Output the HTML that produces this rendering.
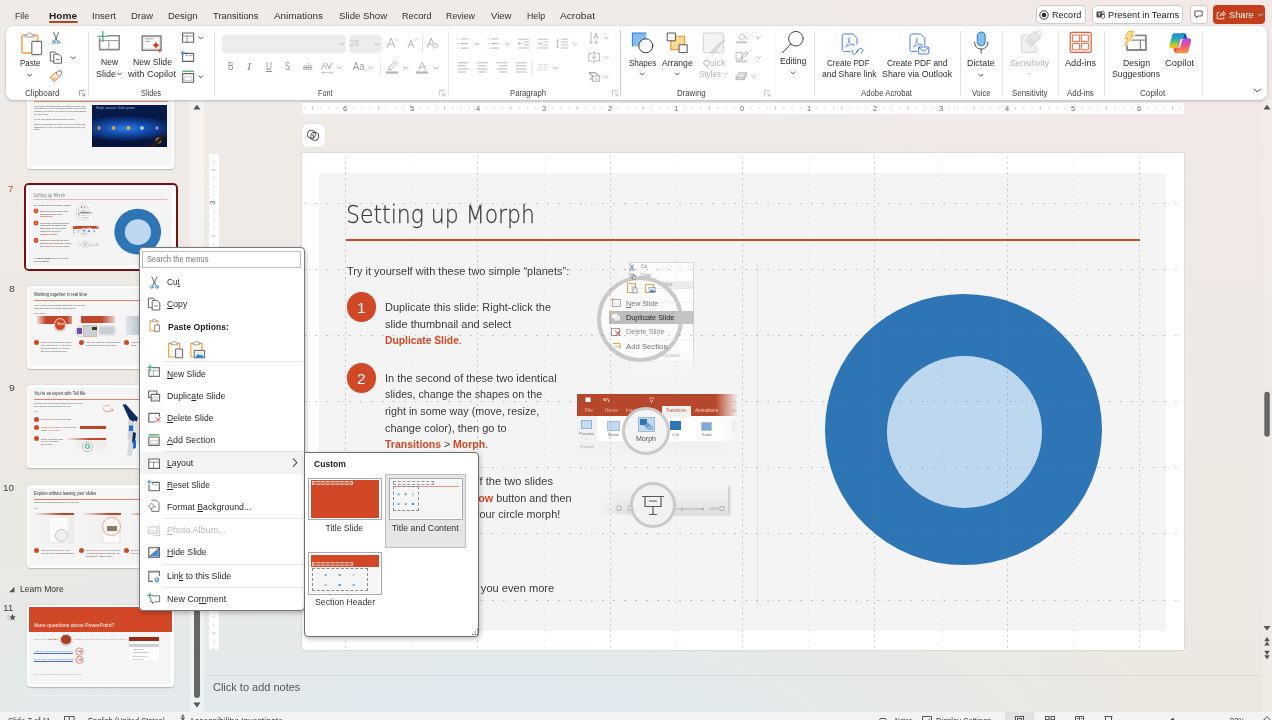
<!DOCTYPE html>
<html lang="en"><head><meta charset="utf-8"><title>PowerPoint</title>
<style>
*{box-sizing:border-box;margin:0;padding:0}
html,body{width:1272px;height:720px;overflow:hidden}
body{font-family:"Liberation Sans",sans-serif;color:#333;position:relative;
background:
 radial-gradient(ellipse 520px 330px at 1250px 60px,rgba(243,232,231,.95),rgba(243,232,231,0) 100%),
 radial-gradient(ellipse 680px 210px at 500px 735px,rgba(222,235,242,1),rgba(222,235,242,0) 100%),
 radial-gradient(ellipse 330px 300px at 40px 700px,rgba(231,233,232,1),rgba(231,233,232,0) 100%),
 linear-gradient(180deg,#f0ebe8 0%,#ede9e4 45%,#ece8e1 100%);}
.a{position:absolute}
.t{position:absolute;white-space:nowrap;line-height:1;font-size:9.3px;color:#2b2b2b}
.i{position:absolute;overflow:visible}
.tab{font-size:9.6px;color:#333}
.rb{font-size:9px;color:#2f2f2f}
.gl{font-size:8.3px;color:#444}
.dis{color:#b4b4b4}
.sep{position:absolute;width:1px;background:#e3e1df;top:31px;height:65px}
.mi{font-size:9.3px;color:#2b2b2b}
.u{text-decoration:underline;text-underline-offset:1px}
.msep{position:absolute;left:163px;width:140px;height:1px;background:#e4e4e4}
svg{display:block}
.rn{font-size:7.5px;color:#6a6a6a}
.gv{position:absolute;top:153.500px;height:496px;width:1px;background-image:linear-gradient(rgba(110,110,110,.36) 1.500px,transparent 1.500px);background-size:1px 5.514px;background-position:0 2.400px}
.gh{position:absolute;left:302.500px;width:881px;height:1px;background-image:linear-gradient(90deg,rgba(110,110,110,.42) 1.400px,transparent 1.400px),linear-gradient(90deg,rgba(110,110,110,.16) 1.200px,transparent 1.200px);background-size:11.028px 1px,11.028px 1px;background-position:1.600px 0,7.200px 0}
.gf{opacity:.3}
.th{position:absolute;background:#fff;border-radius:3.500px;box-shadow:0 .5px 1.500px rgba(0,0,0,.22)}
.thi{position:absolute;left:2.800px;top:2.600px;right:2.800px;bottom:2.800px;background:#f5f5f5}
.sn{font-size:9.800px;color:#444}
.tt{font-size:4.900px;color:#333}
.tx{font-size:2px;color:#4a4a4a}
.st{font-size:8.800px;color:#3a3a3a}
.bl{position:absolute;width:5px;height:5px;border-radius:50%;background:#d24726}
.sl{font-size:11.200px;color:#3b3b3b}
.or{color:#d24726;font-weight:bold}
</style></head><body>
<!-- tab row -->
<div id="tabs">
<span class="t tab" style="top: 10.57px; left: 15px; transform-origin: 0px 50%; transform: scaleX(0.905);">File</span>
<span class="t tab" style="font-weight: bold; color: rgb(34, 34, 34); top: 10.57px; left: 49.3px; transform-origin: 0px 50%; transform: scaleX(1.054);">Home</span>
<div class="a" style="left:49.3px;top:21px;width:28.3px;height:1.7px;background:#c43e1c;border-radius:1px"></div>
<span class="t tab" style="top: 10.57px; left: 91.5px; transform-origin: 0px 50%; transform: scaleX(1.002);">Insert</span>
<span class="t tab" style="top: 10.57px; left: 130.5px; transform-origin: 0px 50%; transform: scaleX(0.983);">Draw</span>
<span class="t tab" style="top: 10.57px; left: 167.5px; transform-origin: 0px 50%; transform: scaleX(0.987);">Design</span>
<span class="t tab" style="top: 10.57px; left: 213px; transform-origin: 0px 50%; transform: scaleX(0.977);">Transitions</span>
<span class="t tab" style="top: 10.57px; left: 274px; transform-origin: 0px 50%; transform: scaleX(1.032);">Animations</span>
<span class="t tab" style="top: 10.57px; left: 338.5px; transform-origin: 0px 50%; transform: scaleX(1.002);">Slide Show</span>
<span class="t tab" style="top: 10.57px; left: 401.5px; transform-origin: 0px 50%; transform: scaleX(0.954);">Record</span>
<span class="t tab" style="top: 10.57px; left: 446px; transform-origin: 0px 50%; transform: scaleX(0.922);">Review</span>
<span class="t tab" style="top: 10.57px; left: 490.5px; transform-origin: 0px 50%; transform: scaleX(0.994);">View</span>
<span class="t tab" style="top: 10.57px; left: 526.5px; transform-origin: 0px 50%; transform: scaleX(0.912);">Help</span>
<span class="t tab" style="top: 10.57px; left: 560px; transform-origin: 0px 50%; transform: scaleX(1.058);">Acrobat</span>
<!-- right buttons -->
<div class="a" style="left:1036px;top:5.200px;width:50px;height:18.400px;background:#fff;border:1px solid #cfcbc9;border-radius:4px"></div>
<svg class="i" style="left:1039.200px;top:9.700px" width="10" height="10" viewBox="0 0 10 10"><circle cx="5" cy="5" r="4.200" fill="none" stroke="#2a2a2a" stroke-width=".9"></circle><circle cx="5" cy="5" r="2.300" fill="#2a2a2a"></circle></svg>
<span class="t tab" style="color: rgb(34, 34, 34); top: 10.07px; left: 1051.8px; transform-origin: 0px 50%; transform: scaleX(0.944);">Record</span>
<div class="a" style="left:1092.3px;top:5.200px;width:91px;height:18.400px;background:#fff;border:1px solid #cfcbc9;border-radius:4px"></div>
<svg class="i" style="left:1096px;top:10px" width="9" height="9" viewBox="0 0 9 9"><rect x=".5" y="1.5" width="5.5" height="6" rx="1" fill="#444"></rect><circle cx="6.8" cy="2.6" r="1.5" fill="none" stroke="#444" stroke-width=".8"></circle><path d="M6 4.5h2.5v2.5a1.5 1.5 0 0 1-2.5 1" fill="none" stroke="#444" stroke-width=".8"></path><path d="M2 3.4h2.6M3.3 3.4v3" stroke="#fff" stroke-width=".8"></path></svg>
<span class="t tab" style="color: rgb(34, 34, 34); top: 10.07px; left: 1108px; transform-origin: 0px 50%; transform: scaleX(0.96);">Present in Teams</span>
<div class="a" style="left:1189.5px;top:5.200px;width:18px;height:18.400px;background:#fff;border:1px solid #cfcbc9;border-radius:4px"></div>
<svg class="i" style="left:1194px;top:10px" width="9" height="9" viewBox="0 0 9 9"><path d="M.8 1h7.4v5H4L2.3 7.7V6H.8z" fill="none" stroke="#333" stroke-width=".8" stroke-linejoin="round"></path></svg>
<div class="a" style="left:1213.3px;top:5.200px;width:52px;height:18.400px;background:#c43e1c;border-radius:4px"></div>
<svg class="i" style="left:1216px;top:9.5px" width="10" height="10" viewBox="0 0 10 10"><path d="M3.6 2.6H1.2v6.2h6.6V7M4 6.2c.2-2 1.4-3 3.4-3V1.6L9.4 3.8 7.4 6V4.6c-1.6 0-2.6.4-3.4 1.6z" fill="none" stroke="#fff" stroke-width=".8" stroke-linejoin="round"></path></svg>
<span class="t tab" style="color: rgb(255, 255, 255); top: 10.07px; left: 1228.5px; transform-origin: 0px 50%; transform: scaleX(0.968);">Share</span>
<svg class="i" style="left:1257.5px;top:13px" width="5" height="4" viewBox="0 0 5 4"><path d="M.5.8l2 2 2-2" fill="none" stroke="#fff" stroke-width=".9"></path></svg>
</div>
<!-- left pane -->
<div id="left">
<div class="a" style="left:190px;top:100px;width:13.600px;height:612px;background:rgba(248,248,248,.6)"></div>
<svg class="i" style="left:190px;top:100px" width="14" height="612" viewBox="0 0 14 612"><path d="M3.300 9.600L6.900 4.800l3.600 4.800z" fill="#555"></path><path d="M3.300 602.600L6.900 607.400l3.600-4.800z" fill="#555"></path><rect x="4" y="470" width="6" height="128" rx="3" fill="#666"></rect></svg>
<!-- thumb 6 -->
<div class="th" style="left:26.700px;top:85px;width:147.800px;height:84px"><div class="thi"></div></div>
<div class="a" style="left:34px;top:100.600px;width:134px;height:.8px;background:#e7907a"></div>
<div class="a" style="left:92px;top:105px;width:74.700px;height:41.500px;background:radial-gradient(ellipse 52px 13px at 45% 56%,#2f7fe6 0%,#1450b4 40%,rgba(8,28,84,0) 100%),linear-gradient(#071a4c,#06143c)"></div>
<svg class="i" style="left:92px;top:105px" width="75" height="42" viewBox="0 0 75 42"><circle cx="7" cy="23" r="1.900" fill="#c8873d"></circle><circle cx="21.500" cy="23" r="2" fill="#e09a45"></circle><circle cx="36.500" cy="23" r="1.900" fill="#e8b23a"></circle><circle cx="50" cy="23" r="1.900" fill="#9fd0d8"></circle><circle cx="65" cy="23" r="1.800" fill="#8d87e0"></circle><circle cx="66.500" cy="35.500" r="3" fill="#b0772f"></circle><path d="M58 41l14-12 2 2-12 11z" fill="#2a1c10"></path></svg>
<span class="t" style="font-size: 2.6px; color: rgb(159, 180, 220); top: 108.11px; left: 96px; transform-origin: 0px 50%; transform: scaleX(1.113);">Morph transition: Solar system</span>
<span class="t tx" style="top: 104.63px; left: 34px; transform-origin: 0px 50%; transform: scaleX(0.917);">Morph makes smooth animations and object movements in your</span>
<span class="t tx" style="top: 107.43px; left: 34px; transform-origin: 0px 50%; transform: scaleX(1.063);">presentations. You use two similar slides to perform the</span>
<span class="t tx" style="top: 110.23px; left: 34px; transform-origin: 0px 50%; transform: scaleX(0.934);">animation, but it looks to your audience like the action happens</span>
<span class="t tx" style="top: 113.03px; left: 34px; transform-origin: 0px 50%; transform: scaleX(1.322);">on one slide.</span>
<span class="t tx" style="top: 117.93px; left: 34px; transform-origin: 0px 50%; transform: scaleX(0.917);"><span style="color:#d24726">Play</span> the video on the right to see a quick example.</span>
<span class="t tx" style="top: 122.73px; left: 34px; transform-origin: 0px 50%; transform: scaleX(0.927);">Morph is a subscription-only feature. If you have an Office 365</span>
<span class="t tx" style="top: 125.53px; left: 34px; transform-origin: 0px 50%; transform: scaleX(0.946);">subscription, you can try it yourself with the steps on the next</span>
<span class="t tx" style="top: 128.33px; left: 34px; transform-origin: 0px 50%; transform: scaleX(1.284);">slide.</span>
<!-- thumb 7 -->
<div class="a" style="left:24px;top:183px;width:153.500px;height:88.300px;border:2.200px solid #7c0f12;border-radius:5px;background:#fff"></div>
<div id="thumb7" class="a" style="left:26.200px;top:185.200px;width:149px;height:84px;overflow:hidden;border-radius:3px;background:#fff"><div class="a" style="left: 0px; top: 0px; width: 1272px; height: 720px; transform-origin: 0px 0px; transform: scale(0.1689) translate(-302px, -153px);">
<div class="a" style="left:319.400px;top:172.800px;width:846.600px;height:458.200px;background:#f4f4f4"></div>
<span class="t" style="font-size: 25.6px; color: rgb(62, 62, 62); font-family: &quot;DejaVu Sans Light&quot;, &quot;DejaVu Sans&quot;, &quot;Liberation Sans&quot;, sans-serif; font-weight: 200; -webkit-text-stroke: 0.28px rgb(62, 62, 62); top: 201.83px; left: 345.8px; transform-origin: 0px 50%; transform: scaleX(0.858);">Setting up Morph</span>
<div class="a" style="left:345.800px;top:239.300px;width:794.400px;height:1.900px;background:#d24726"></div>
<span class="t sl" style="top: 265.59px; left: 346.7px; transform-origin: 0px 50%; transform: scaleX(0.984);">Try it yourself with these two simple “planets”:</span>
<div class="a" style="left:346.700px;top:292.4px;width:29.600px;height:29.600px;border-radius:50%;background:#d24726"></div>
<span class="t" style="font-size: 15.5px; color: rgb(255, 255, 255); top: 299.68px; left: 357.19px; transform: scaleX(1.002);">1</span>
<span class="t sl" style="top: 302.29px; left: 385.3px; transform-origin: 0px 50%; transform: scaleX(0.978);">Duplicate this slide: Right-click the</span>
<span class="t sl" style="top: 318.59px; left: 385.3px; transform-origin: 0px 50%; transform: scaleX(0.982);">slide thumbnail and select</span>
<span class="t sl" style="top: 335.09px; left: 385.3px; transform-origin: 0px 50%; transform: scaleX(0.921);"><span class="or">Duplicate Slide</span>.</span>
<div class="a" style="left:346.700px;top:363.4px;width:29.600px;height:29.600px;border-radius:50%;background:#d24726"></div>
<span class="t" style="font-size: 15.5px; color: rgb(255, 255, 255); top: 370.68px; left: 357.19px; transform: scaleX(1.002);">2</span>
<span class="t sl" style="top: 373.09px; left: 385.3px; transform-origin: 0px 50%; transform: scaleX(0.982);">In the second of these two identical</span>
<span class="t sl" style="top: 389.49px; left: 385.3px; transform-origin: 0px 50%; transform: scaleX(0.961);">slides, change the shapes on the</span>
<span class="t sl" style="top: 405.99px; left: 385.3px; transform-origin: 0px 50%; transform: scaleX(0.962);">right in some way (move, resize,</span>
<span class="t sl" style="top: 422.59px; left: 385.3px; transform-origin: 0px 50%; transform: scaleX(0.983);">change color), then go to</span>
<span class="t sl" style="top: 438.99px; left: 385.3px; transform-origin: 0px 50%; transform: scaleX(0.94);"><span class="or">Transitions</span> &gt; <span class="or">Morph</span>.</span>
<div class="a" style="left:346.700px;top:466.4px;width:29.600px;height:29.600px;border-radius:50%;background:#d24726"></div>
<span class="t" style="font-size: 15.5px; color: rgb(255, 255, 255); top: 473.68px; left: 357.19px; transform: scaleX(1.002);">3</span>
<span class="t sl" style="top: 476.09px; left: 385.3px; transform-origin: 0px 50%; transform: scaleX(0.993);">Return to the first of the two slides</span>
<span class="t sl" style="top: 492.79px; left: 385.3px; transform-origin: 0px 50%; transform: scaleX(0.967);">and press <span class="or">Slide Show</span> button and then</span>
<span class="t sl" style="top: 509.09px; left: 385.3px; transform-origin: 0px 50%; transform: scaleX(0.968);">select <span class="or">Play</span> to see your circle morph!</span>
<span class="t sl" style="top: 582.79px; left: 346.7px; transform-origin: 0px 50%; transform: scaleX(0.992);"><span class="or" style="font-weight:normal">Hint:</span> <b>Effect Options</b> gives you even more</span>
<span class="t sl" style="top: 599.29px; left: 346.7px; transform-origin: 0px 50%; transform: scaleX(1.007);">options for <b>Morph</b>.</span>
<div class="a" style="left:757.400px;top:260.500px;width:1px;height:352px;background:#ebebeb"></div>
<!-- slide pictures -->
<div class="a" style="left:628.700px;top:261.700px;width:65px;height:110px;background:#fdfdfd;border:1px solid #d6d6d6;border-bottom:none;-webkit-mask-image:linear-gradient(#000 78%,transparent);mask-image:linear-gradient(#000 78%,transparent)"></div>
<div class="a" style="left:630px;top:281px;width:63px;height:7.500px;background:#ececec"></div>
<span class="t" style="font-size: 4.5px; color: rgb(119, 119, 119); top: 264.79px; left: 641px; transform-origin: 0px 50%; transform: scaleX(0.855);">Cut</span>
<span class="t" style="font-size: 4.5px; color: rgb(119, 119, 119); top: 274.39px; left: 641px; transform-origin: 0px 50%; transform: scaleX(0.951);">Copy</span>
<span class="t" style="font-size: 4.5px; color: rgb(153, 153, 153); top: 282.59px; left: 655px; transform-origin: 0px 50%; transform: scaleX(0.61);">Paste Options:</span>
<span class="t" style="font-size: 4.5px; color: rgb(187, 187, 187); top: 354.09px; left: 641px; transform-origin: 0px 50%; transform: scaleX(1.046);">Check for Updates</span>
<div class="a" style="left:597px;top:276px;width:86px;height:86px;border-radius:50%;background:#fbfbfb;border:4.500px solid #c9c9c9"></div>
<div class="a" style="left:608.800px;top:311.400px;width:67px;height:13px;background:#bdbdbd"></div>
<div class="a" style="left:675px;top:311.400px;width:18.500px;height:13px;background:#c4c4c4"></div>
<svg class="i" style="left:0;top:0" width="1272" height="720" viewBox="0 0 1272 720" fill="none">
<path d="M630.500 264.500l3 5M633.500 264.500l-3 5" stroke="#555" stroke-width=".7"></path><circle cx="630.600" cy="270" r=".8" stroke="#2b88d8" stroke-width=".6"></circle><circle cx="633.400" cy="270" r=".8" stroke="#2b88d8" stroke-width=".6"></circle>
<path d="M631 274h3v4h-3zM632.500 275.500h3v4h-3z" stroke="#666" stroke-width=".6" fill="#fff"></path>
<rect x="627.500" y="283.500" width="8" height="9" stroke="#e8a23c" stroke-width="1" fill="#fff"></rect><path d="M631 286h5M631 288h5M631 290h5" stroke="#999" stroke-width=".6"></path><rect x="633" y="288" width="4" height="5" fill="#fff" stroke="#666" stroke-width=".6"></rect>
<rect x="645.500" y="284.500" width="8" height="8" stroke="#e8a23c" stroke-width="1" fill="#fff"></rect><rect x="649" y="287.500" width="6.500" height="5" fill="#dfeaf6" stroke="#888" stroke-width=".6"></rect><path d="M649.500 292l2-2.400 1.500 1.400 1-.8 1.500 1.800z" fill="#2e75b6"></path>
<rect x="612.500" y="299.500" width="8" height="7" stroke="#999" stroke-width=".8" fill="#f3f3f3"></rect><path d="M611 298l2.400 2.400M613.400 298l-2.400 2.400" stroke="#e8a23c" stroke-width=".7"></path>
<rect x="613.500" y="315" width="7" height="6" stroke="#aaa" stroke-width=".7" fill="#eee"></rect><rect x="611.500" y="313.500" width="6" height="5" fill="#f6f6f6" stroke="#ccc" stroke-width=".5"></rect><circle cx="612" cy="314" r="1.200" fill="#f3c37a"></circle>
<rect x="611.500" y="328.500" width="8" height="7" stroke="#888" stroke-width=".8" fill="#fafafa"></rect><path d="M615 330.500l5.500 5.500M620.500 330.500l-5.500 5.500" stroke="#e23b2e" stroke-width="1"></path>
<path d="M613 343.500h7v5.500" stroke="#e8a23c" stroke-width="1"></path><path d="M615 346.500h5" stroke="#e8a23c" stroke-width=".8"></path>
<path d="M631 288.600h62M631 302.300h62M631 340h62M631 362h62" stroke="#e2e2e2" stroke-width=".5"></path>
</svg>
<span class="t" style="font-size: 7.6px; color: rgb(119, 119, 119); top: 299.62px; left: 626.3px; transform-origin: 0px 50%; transform: scaleX(0.942);"><span class="u">N</span>ew Slide</span>
<span class="t" style="font-size: 7.6px; color: rgb(38, 38, 38); top: 313.92px; left: 626.3px; transform-origin: 0px 50%; transform: scaleX(0.952);">Duplicate Slide</span>
<span class="t" style="font-size: 7.6px; color: rgb(138, 138, 138); top: 328.42px; left: 626.3px; transform-origin: 0px 50%; transform: scaleX(0.945);">Delete Slide</span>
<span class="t" style="font-size: 7.6px; color: rgb(119, 119, 119); top: 342.92px; left: 626.3px; transform-origin: 0px 50%; transform: scaleX(1.018);">Add Section</span>
<!-- ribbon picture -->
<div class="a" style="left:577.300px;top:393.500px;width:161px;height:66px;-webkit-mask-image:linear-gradient(90deg,#000 86%,transparent 100%),linear-gradient(#000 82%,transparent 100%);-webkit-mask-composite:source-in;mask-image:linear-gradient(90deg,#000 86%,transparent 100%),linear-gradient(#000 82%,transparent 100%);mask-composite:intersect">
 <div class="a" style="left:0;top:0;width:161px;height:22px;background:#b7472a"></div>
 <div class="a" style="left:0;top:22px;width:161px;height:44px;background:#f1f1f1"></div>
 <div class="a" style="left:20px;top:22px;width:141px;height:25px;background:#fff"></div>
 <div class="a" style="left:85px;top:12px;width:29px;height:11px;background:#f1f1f1"></div>
 <div class="a" style="left:4px;top:26px;width:11px;height:9px;background:#c6dcf0;border:.5px solid #8fb4dc"></div>
 <div class="a" style="left:30px;top:27px;width:13px;height:10px;background:#c3d9ef;border:.5px solid #a3c0de"></div>
 <div class="a" style="left:93px;top:27px;width:11px;height:9px;background:#2e75b6"></div>
 <div class="a" style="left:124px;top:28px;width:11px;height:9px;background:#7fa8d6;border:.5px solid #a9c4e2"></div>
 <div class="a" style="left:155px;top:27px;width:8px;height:10px;background:#c3d9ef"></div>
</div>
<span class="t" style="font-size: 4.5px; color: rgb(230, 184, 170); top: 408.59px; left: 585px; transform-origin: 0px 50%; transform: scaleX(1.101);">File</span>
<span class="t" style="font-size: 4.5px; color: rgb(230, 184, 170); top: 408.59px; left: 605px; transform-origin: 0px 50%; transform: scaleX(1.082);">Home</span>
<span class="t" style="font-size: 4.5px; color: rgb(230, 184, 170); top: 408.59px; left: 626px; transform-origin: 0px 50%; transform: scaleX(1.065);">Insert</span>
<span class="t" style="font-size: 4.5px; color: rgb(201, 84, 58); top: 408.59px; left: 666px; transform-origin: 0px 50%; transform: scaleX(0.916);">Transitions</span>
<span class="t" style="font-size: 4.5px; color: rgb(240, 207, 197); top: 408.59px; left: 695px; transform-origin: 0px 50%; transform: scaleX(1.033);">Animations</span>
<span class="t" style="font-size: 4.5px; color: rgb(219, 167, 154); top: 408.59px; left: 726px; transform-origin: 0px 50%; transform: scaleX(1.098);">Slide</span>
<span class="t" style="font-size: 4.3px; color: rgb(119, 119, 119); top: 431.69px; left: 579px; transform-origin: 0px 50%; transform: scaleX(0.981);">Preview</span>
<span class="t" style="font-size: 4.3px; color: rgb(170, 170, 170); top: 444.69px; left: 580px; transform-origin: 0px 50%; transform: scaleX(0.915);">Preview</span>
<span class="t" style="font-size: 4.3px; color: rgb(102, 102, 102); top: 432.69px; left: 608px; transform-origin: 0px 50%; transform: scaleX(1.07);">None</span>
<span class="t" style="font-size: 4.3px; color: rgb(119, 119, 119); top: 432.69px; left: 672px; transform-origin: 0px 50%; transform: scaleX(1.047);">Cut</span>
<span class="t" style="font-size: 4.3px; color: rgb(119, 119, 119); top: 432.69px; left: 702px; transform-origin: 0px 50%; transform: scaleX(1.021);">Fade</span>
<svg class="i" style="left:0;top:0" width="1272" height="720" viewBox="0 0 1272 720" fill="none" stroke="#fff" stroke-width=".8">
<rect x="585.500" y="397.500" width="5" height="4.500" fill="#fff" stroke="none"></rect><path d="M604.500 400c2-2.500 5-1 4 2M604 398v2.400h2.400"></path><path d="M649 398h5M650 399.500l1.500 3 1.500-3" stroke-width=".6"></path>
</svg>
<div class="a" style="left:622px;top:407px;width:48px;height:48px;border-radius:50%;background:#f4f4f4;border:3px solid #c9c9c9"></div>
<div class="a" style="left:637.500px;top:417px;width:17px;height:15px;background:#c3d9ef;border:.6px solid #9cbbdc"></div>
<div class="a" style="left:639.500px;top:419px;width:7px;height:6px;background:#2e75b6"></div>
<div class="a" style="left:644.500px;top:422.500px;width:5px;height:5px;background:#6f9fd0;transform:rotate(40deg)"></div>
<div class="a" style="left:648px;top:425.500px;width:5px;height:4.500px;background:#8fb4dc"></div>
<span class="t" style="font-size: 7.5px; color: rgb(85, 85, 85); top: 435.28px; left: 636px; transform-origin: 0px 50%; transform: scaleX(0.94);">Morph</span>
<!-- slideshow bar -->
<div class="a" style="left:612px;top:486px;width:117.500px;height:29px;background:linear-gradient(90deg,rgba(0,0,0,0),rgba(0,0,0,.16) 40%);filter:blur(1px)"></div>
<div class="a" style="left:599px;top:484px;width:129px;height:30px;background:linear-gradient(#f6f6f6 0%,#ececec 55%,#dedede 100%);-webkit-mask-image:linear-gradient(90deg,transparent,#000 22%);mask-image:linear-gradient(90deg,transparent,#000 22%)"></div>
<svg class="i" style="left:0;top:0" width="1272" height="720" viewBox="0 0 1272 720" fill="none" stroke="#999" stroke-width=".6">
<path d="M676 509h28M682 507v4M702.500 507.500v3M701 509h3"></path><rect x="617" y="506" width="4" height="4.500"></rect><rect x="628" y="506" width="4" height="4.500"></rect><rect x="720" y="506.500" width="4" height="4"></rect>
</svg>
<span class="t" style="font-size: 4px; color: rgb(153, 153, 153); top: 506.85px; left: 709px; transform-origin: 0px 50%; transform: scaleX(0.977);">120%</span>
<div class="a" style="left:629.700px;top:481.700px;width:46.600px;height:46.600px;border-radius:50%;background:#f1f1f1;border:3px solid #c9c9c9"></div>
<svg class="i" style="left:0;top:0" width="1272" height="720" viewBox="0 0 1272 720" fill="none" stroke="#5a5a5a" stroke-width="1.200">
<path d="M642 496.500h22M645 497v9.500h16v-9.500M649 501h8M653 506.500v8M649 514.500h8"></path>
</svg>
<!-- donut -->
<div class="a" style="left:825.300px;top:294.100px;width:276.800px;height:270.800px;border-radius:50%;background:#2e75b6"></div>
<div class="a" style="left:886.700px;top:355.500px;width:155.800px;height:152px;border-radius:50%;background:#bdd7ee"></div>
</div></div>
<span class="t sn" style="color: rgb(210, 71, 38); top: 184.04px; left: 8.4px; transform-origin: 0px 50%; transform: scaleX(0.99);">7</span>
<!-- thumb 8 -->
<span class="t sn" style="top: 283.64px; left: 8.6px; transform-origin: 0px 50%; transform: scaleX(1.064);">8</span>
<div class="th" style="left:26.700px;top:285.700px;width:147.800px;height:83.300px"><div class="thi"></div></div>
<span class="t tt" style="top: 292.67px; left: 34px; transform-origin: 0px 50%; transform: scaleX(0.849);">Working together in real time</span>
<div class="a" style="left:34px;top:299.900px;width:134px;height:.9px;background:#e27f66"></div>
<span class="t tx" style="top: 303.53px; left: 34px; transform-origin: 0px 50%; transform: scaleX(0.923);">When you share your presentation with others, you’ll see them</span>
<span class="t tx" style="top: 306.53px; left: 34px; transform-origin: 0px 50%; transform: scaleX(1.369);">working with you at the same time.</span>
<span class="t tx" style="top: 311.93px; left: 34px; transform-origin: 0px 50%; transform: scaleX(0.925);">How it works:</span>
<div class="a" style="left:37px;top:316px;width:35px;height:8px;background:linear-gradient(90deg,rgba(192,66,40,.15),#c0452a 25%,#c0452a 85%,rgba(192,66,40,.5));filter:blur(.4px)"></div>
<div class="a" style="left:53.800px;top:318px;width:12.600px;height:12.600px;border-radius:50%;background:#d24726;border:1px solid #f2ded8;box-shadow:0 .5px 1px rgba(0,0,0,.3)"></div>
<span class="t" style="font-size: 2.8px; color: rgb(255, 255, 255); top: 322.8px; left: 56.5px; transform-origin: 0px 50%; transform: scaleX(1.004);">Share</span>
<div class="a" style="left:81px;top:316px;width:34px;height:6.500px;background:linear-gradient(90deg,#c0452a 60%,rgba(192,66,40,.2));filter:blur(.4px)"></div>
<div class="a" style="left:74.500px;top:325.500px;width:11px;height:11px;border-radius:50%;background:#f4f2f6;border:.7px solid #c9c9c9"></div>
<div class="a" style="left:77px;top:328px;width:4.500px;height:6px;background:#6a4bb0"></div>
<div class="a" style="left:83px;top:325px;width:14px;height:12px;background:#c9d0d6;border:.6px solid #e3b5aa"></div>
<div class="a" style="left:92px;top:326.500px;width:4.500px;height:3.500px;background:#3a3f1e"></div>
<div class="a" style="left:99px;top:326px;width:16px;height:9px;background:#c8cfd4;filter:blur(.8px)"></div>
<div class="a" style="left:126px;top:316px;width:20px;height:19px;background:linear-gradient(90deg,rgba(170,180,196,.25),#aab3c2);filter:blur(.7px)"></div>
<div class="bl" style="left:34px;top:340.300px"></div><div class="bl" style="left:79.200px;top:340.300px"></div><div class="bl" style="left:124px;top:340.300px"></div>
<span class="t tx" style="top: 341.23px; left: 40.5px; transform-origin: 0px 50%; transform: scaleX(0.952);">Select <span style="color:#d24726">Share</span> from above the ribbon,</span>
<span class="t tx" style="top: 344.03px; left: 40.5px; transform-origin: 0px 50%; transform: scaleX(0.936);">or by using short-key <span style="color:#d24726">Alt-ZS</span>, to invite</span>
<span class="t tx" style="top: 346.83px; left: 40.5px; transform-origin: 0px 50%; transform: scaleX(0.973);">people to work with you (You can</span>
<span class="t tx" style="top: 349.63px; left: 40.5px; transform-origin: 0px 50%; transform: scaleX(0.976);">save to the cloud at this point.)</span>
<span class="t tx" style="top: 341.23px; left: 85.5px; transform-origin: 0px 50%; transform: scaleX(0.91);">When other people are in the presentation,</span>
<span class="t tx" style="top: 344.03px; left: 85.5px; transform-origin: 0px 50%; transform: scaleX(0.888);">a marker shows who is on which slide…</span>
<span class="t tx" style="top: 341.23px; left: 130.5px; transform-origin: 0px 50%; transform: scaleX(1.002);">…and the part of the slide they’re</span>
<span class="t tx" style="top: 344.03px; left: 130.5px; transform-origin: 0px 50%; transform: scaleX(0.852);">editing.</span>
<!-- thumb 9 -->
<span class="t sn" style="top: 383.04px; left: 8.6px; transform-origin: 0px 50%; transform: scaleX(1.064);">9</span>
<div class="th" style="left:26.700px;top:385.200px;width:147.800px;height:83.200px"><div class="thi"></div></div>
<span class="t tt" style="top: 392.07px; left: 34px; transform-origin: 0px 50%; transform: scaleX(0.827);">You’re an expert with Tell Me</span>
<div class="a" style="left:34px;top:399.200px;width:134px;height:.9px;background:#e27f66"></div>
<span class="t tx" style="top: 401.63px; left: 34px; transform-origin: 0px 50%; transform: scaleX(0.938);">The Tell Me box finds the right command when you need it,</span>
<span class="t tx" style="top: 404.63px; left: 34px; transform-origin: 0px 50%; transform: scaleX(0.912);">so you can save time and focus on your work.</span>
<span class="t tx" style="top: 409.93px; left: 34px; transform-origin: 0px 50%; transform: scaleX(0.81);">Try it:</span>
<div class="bl" style="left:34px;top:416.700px"></div><div class="bl" style="left:34px;top:425px"></div><div class="bl" style="left:34px;top:436.300px"></div>
<span class="t tx" style="top: 417.93px; left: 40.5px; transform-origin: 0px 50%; transform: scaleX(0.899);">Select the <span style="color:#d24726">Picture</span> picture on the right.</span>
<span class="t tx" style="top: 425.63px; left: 40.5px; transform-origin: 0px 50%; transform: scaleX(0.92);">Type <span style="color:#d24726">animation</span> in the <span style="color:#d24726">Tell Me</span> box, and then</span>
<span class="t tx" style="top: 428.63px; left: 40.5px; transform-origin: 0px 50%; transform: scaleX(0.933);">choose <span style="color:#d24726">Add Animation</span>.</span>
<span class="t tx" style="top: 437.63px; left: 40.5px; transform-origin: 0px 50%; transform: scaleX(0.884);">Choose an animation effect,</span>
<span class="t tx" style="top: 440.43px; left: 40.5px; transform-origin: 0px 50%; transform: scaleX(0.925);">like <span style="color:#d24726">Zoom</span>, and watch</span>
<span class="t tx" style="top: 443.23px; left: 40.5px; transform-origin: 0px 50%; transform: scaleX(0.884);">what happens.</span>
<div class="a" style="left:80px;top:426px;width:25.500px;height:3px;background:#c0452a"></div>
<div class="a" style="left:66px;top:437.600px;width:40px;height:2.400px;background:linear-gradient(90deg,rgba(192,66,40,0),#c0452a 60%)"></div>
<div class="a" style="left:76px;top:440.500px;width:30px;height:14px;background:linear-gradient(rgba(236,236,232,1),rgba(240,238,232,0));"></div>
<div class="a" style="left:82px;top:441.500px;width:10.500px;height:10.500px;border-radius:50%;background:#eef6f0;border:.7px solid #bdbdbd"></div>
<div class="a" style="left:84.800px;top:444.300px;width:5px;height:5px;border-radius:50%;border:.8px solid #2f9c6a"></div>
<svg class="i" style="left:100px;top:400px" width="45" height="65" viewBox="0 0 45 65"><path d="M3 8.500c.8 2.600 2.600 3.600 5 3.200 1.800-.4 3.400-.8 4.600-1.800M11 9l1.800.6-.6 1.800" fill="none" stroke="#d24726" stroke-width=".5"></path><path d="M3 6.500l7-1.500" stroke="#d24726" stroke-width=".4"></path>
<path d="M22.500 4.200l3.500.3 12 13.500-2.500 6.500-6-5z" fill="#0e2a5c"></path><path d="M28.500 19l6 3v14l-4 5-3-2z" fill="#cfd3d6"></path><rect x="29" y="25.500" width="4" height="5.500" fill="#1f6fd0"></rect><path d="M34 20l5 4v18l-5 2z" fill="#e3e5e6"></path><path d="M29 38l5 1-2 16-5 2z" fill="#d7d9da"></path><path d="M33 32l3 1-1 8-3 2z" fill="#0e2a5c"></path><path d="M33 41l3-1v8l-3 1z" fill="#1f6fd0"></path></svg>
<!-- thumb 10 -->
<span class="t sn" style="top: 483.04px; left: 3.4px; transform-origin: 0px 50%; transform: scaleX(1.009);">10</span>
<div class="th" style="left:26.700px;top:485px;width:147.800px;height:83.300px"><div class="thi"></div></div>
<span class="t tt" style="top: 491.67px; left: 34px; transform-origin: 0px 50%; transform: scaleX(0.826);">Explore without leaving your slides</span>
<div class="a" style="left:34px;top:498.800px;width:134px;height:.9px;background:#e27f66"></div>
<span class="t tx" style="top: 501.23px; left: 34px; transform-origin: 0px 50%; transform: scaleX(0.912);">Smart Lookup brings research directly in to PowerPoint.</span>
<span class="t tx" style="top: 506.73px; left: 34px; transform-origin: 0px 50%; transform: scaleX(0.81);">Try it:</span>
<div class="a" style="left:34px;top:512.800px;width:39.500px;height:31.500px;background:linear-gradient(90deg,#f4f4f4,#ececec)"></div>
<div class="a" style="left:34px;top:512.800px;width:39.500px;height:2.400px;background:linear-gradient(90deg,rgba(192,66,40,0),#c0452a 70%)"></div>
<div class="a" style="left:50px;top:518px;width:18px;height:24px;background:#fbfbfb"></div>
<div class="a" style="left:54.500px;top:528.500px;width:13px;height:13px;border-radius:50%;background:#f0f0f0;border:.8px solid #c4c4c4"></div>
<div class="a" style="left:81.500px;top:512.800px;width:39px;height:31.500px;background:linear-gradient(90deg,#f4f4f4,#ececec)"></div>
<div class="a" style="left:81.500px;top:512.800px;width:39px;height:2.400px;background:linear-gradient(90deg,rgba(192,66,40,0),#c0452a 70%)"></div>
<div class="a" style="left:104px;top:518px;width:15px;height:24px;background:#fbfbfb"></div>
<div class="a" style="left:101.500px;top:517px;width:19px;height:19px;border-radius:50%;background:#f8f6f4;border:.7px solid #eaa88f"></div>
<div class="a" style="left:107px;top:525.500px;width:10px;height:5.500px;background:#8c7b62"></div>
<div class="a" style="left:128.500px;top:512.800px;width:30px;height:2.400px;background:linear-gradient(90deg,rgba(192,66,40,0),#c0452a 70%)"></div>
<div class="bl" style="left:34px;top:548px"></div><div class="bl" style="left:79.200px;top:548px"></div><div class="bl" style="left:124px;top:548px"></div>
<span class="t tx" style="top: 548.93px; left: 40.5px; transform-origin: 0px 50%; transform: scaleX(0.94);">Right-click in the word <span style="color:#d24726">office</span> in the</span>
<span class="t tx" style="top: 551.73px; left: 40.5px; transform-origin: 0px 50%; transform: scaleX(0.91);">following phrase: <b>OFFICE TELEPHONE</b></span>
<span class="t tx" style="top: 548.93px; left: 85.5px; transform-origin: 0px 50%; transform: scaleX(0.981);">Choose <span style="color:#d24726">Smart Lookup</span>, and notice that</span>
<span class="t tx" style="top: 551.73px; left: 85.5px; transform-origin: 0px 50%; transform: scaleX(0.921);">results are contextual for that phrase, not</span>
<span class="t tx" style="top: 554.53px; left: 85.5px; transform-origin: 0px 50%; transform: scaleX(1.275);">Microsoft® Office apps.</span>
<span class="t tx" style="top: 548.93px; left: 130.5px; transform-origin: 0px 50%; transform: scaleX(0.859);">Just for fun, try Smart Lookup again by</span>
<span class="t tx" style="top: 551.73px; left: 130.5px; transform-origin: 0px 50%; transform: scaleX(0.987);">right-clicking on the word Office</span>
<!-- section -->
<svg class="i" style="left:8px;top:586px" width="8" height="7" viewBox="0 0 8 7"><path d="M6.500.8v5.400H1z" fill="#555"></path></svg>
<span class="t" style="font-size: 9.6px; color: rgb(51, 51, 51); top: 584.35px; left: 20.3px; transform-origin: 0px 50%; transform: scaleX(0.891);">Learn More</span>
<!-- thumb 11 -->
<span class="t sn" style="top: 602.54px; left: 3.2px; transform-origin: 0px 50%; transform: scaleX(1.032);">11</span>
<svg class="i" style="left:6.500px;top:613px" width="9" height="9" viewBox="0 0 9 9"><path d="M5.500.8l1 2.400 2.300.2-1.800 1.600.6 2.400-2.100-1.300-2.100 1.300.6-2.400L2.200 3.400l2.300-.2z" fill="#555"></path><path d="M.6 2.600h1.200M.4 4.400h1M.8 6.200h1" stroke="#555" stroke-width=".5"></path></svg>
<div class="th" style="left:26.600px;top:604.800px;width:147.600px;height:82px"><div class="thi"></div></div>
<div class="a" style="left:29.400px;top:607.200px;width:142.300px;height:25px;background:#d24726"></div>
<span class="t" style="font-size: 4.8px; color: rgb(255, 255, 255); top: 623.62px; left: 34px; transform-origin: 0px 50%; transform: scaleX(1.078);">More questions about PowerPoint?</span>
<span class="t tx" style="color: rgb(153, 153, 153); top: 638.33px; left: 34px; transform-origin: 0px 50%; transform: scaleX(1.491);">Select the <b style="color:#d24726">Tell Me</b></span>
<div class="a" style="left:60.300px;top:633.500px;width:11.500px;height:11.500px;border-radius:50%;background:#b03a20;border:.8px solid #e7e3e1;box-shadow:0 .5px 1px rgba(0,0,0,.3)"></div>
<span class="t tx" style="color: rgb(153, 153, 153); top: 638.33px; left: 73.5px; transform-origin: 0px 50%; transform: scaleX(1.484);">button and type what you want to know.</span>
<span class="t tx" style="color: rgb(59, 111, 208); text-decoration: underline; top: 650.13px; left: 34px; transform-origin: 0px 50%; transform: scaleX(1.426);">Visit the PowerPoint team blog</span>
<span class="t tx" style="color: rgb(59, 111, 208); text-decoration: underline; top: 658.43px; left: 34px; transform-origin: 0px 50%; transform: scaleX(1.448);">Go to free PowerPoint training</span>
<svg class="i" style="left:74.500px;top:646.500px" width="10" height="18" viewBox="0 0 10 18" fill="none" stroke="#d24726" stroke-width=".6"><circle cx="4.500" cy="4.500" r="3.600"></circle><path d="M2.500 4.500h4M5 3l1.500 1.500L5 6"></path><circle cx="4.500" cy="12.800" r="3.600"></circle><path d="M2.500 12.800h4M5 11.300l1.500 1.500L5 14.300"></path></svg>
<span class="t tx" style="color: rgb(170, 170, 170); top: 673.43px; left: 34px; transform-origin: 0px 50%; transform: scaleX(1.037);">Give us your feedback on this tour, we are listening!</span>
<div class="a" style="left:129px;top:637px;width:30px;height:3.800px;background:#9c2b16"></div>
<div class="a" style="left:129px;top:640.800px;width:30px;height:20.500px;background:#fdfdfd"></div>
<div class="a" style="left:129px;top:644px;width:30px;height:3.200px;background:#cfcfcf"></div>
<span class="t" style="font-size: 2.2px; color: rgb(119, 119, 119); top: 648.32px; left: 133px; transform-origin: 0px 50%; transform: scaleX(0.655);">change font color</span><span class="t" style="font-size: 2.2px; color: rgb(119, 119, 119); top: 651.42px; left: 133px; transform-origin: 0px 50%; transform: scaleX(0.658);">change slide background</span><span class="t" style="font-size: 2.2px; color: rgb(119, 119, 119); top: 654.52px; left: 133px; transform-origin: 0px 50%; transform: scaleX(0.65);">insert image from web</span><span class="t" style="font-size: 2.2px; color: rgb(119, 119, 119); top: 657.62px; left: 133px; transform-origin: 0px 50%; transform: scaleX(0.679);">add slide notes</span>
</div>
<!-- ribbon -->
<div class="a" style="left:5.5px;top:25.8px;width:1261.5px;height:74px;background:#fff;border-radius:7px;box-shadow:0 1px 3px rgba(0,0,0,.22),0 0 1px rgba(0,0,0,.12)"></div>
<div id="ribbon">
<div class="sep" style="left:88px"></div><div class="sep" style="left:214px"></div><div class="sep" style="left:447.5px;background:#ecebea"></div>
<div class="sep" style="left:620.4px;background:#d2d0ce;top:29.500px;height:66.500px"></div><div class="sep" style="left:774.6px;background:#f6f5f4"></div><div class="sep" style="left:813.6px"></div><div class="sep" style="left:960.3px"></div>
<div class="sep" style="left:1002.4px"></div><div class="sep" style="left:1057.6px"></div><div class="sep" style="left:1104.4px"></div><div class="sep" style="left:1202px"></div>
<!-- clipboard -->
<span class="t rb" style="top: 59.08px; left: 19.6px; transform-origin: 0px 50%; transform: scaleX(0.882);">Paste</span>
<span class="t gl" style="top: 88.57px; left: 24.8px; transform-origin: 0px 50%; transform: scaleX(0.969);">Clipboard</span>
<!-- slides -->
<span class="t rb" style="top: 57.88px; left: 100.6px; transform-origin: 0px 50%; transform: scaleX(0.949);">New</span>
<span class="t rb" style="top: 69.98px; left: 95.6px; transform-origin: 0px 50%; transform: scaleX(0.994);">Slide</span>
<span class="t rb" style="top: 57.88px; left: 132.6px; transform-origin: 0px 50%; transform: scaleX(0.962);">New Slide</span>
<span class="t rb" style="top: 69.98px; left: 127.8px; transform-origin: 0px 50%; transform: scaleX(1.027);">with Copilot</span>
<span class="t gl" style="top: 88.57px; left: 141px; transform-origin: 0px 50%; transform: scaleX(0.885);">Slides</span>
<!-- font -->
<div class="a" style="left:221.5px;top:34.8px;width:124.5px;height:18.2px;background:#eeedec;border-radius:3px"></div>
<div class="a" style="left:348.5px;top:34.8px;width:33.2px;height:18.2px;background:#eeedec;border-radius:3px"></div>
<span class="t rb" style="color: rgb(192, 192, 192); top: 39.38px; left: 350.3px; transform-origin: 0px 50%; transform: scaleX(0.919);">28</span>
<span class="t gl" style="top: 88.57px; left: 318.3px; transform-origin: 0px 50%; transform: scaleX(0.873);">Font</span>
<!-- paragraph -->
<span class="t gl" style="top: 88.57px; left: 509.8px; transform-origin: 0px 50%; transform: scaleX(0.929);">Paragraph</span>
<!-- drawing -->
<span class="t rb" style="top: 58.68px; left: 628.7px; transform-origin: 0px 50%; transform: scaleX(0.894);">Shapes</span>
<span class="t rb" style="top: 58.68px; left: 662.3px; transform-origin: 0px 50%; transform: scaleX(0.958);">Arrange</span>
<span class="t rb dis" style="top: 58.68px; left: 702.7px; transform-origin: 0px 50%; transform: scaleX(0.969);">Quick</span>
<span class="t rb dis" style="top: 69.98px; left: 698.6px; transform-origin: 0px 50%; transform: scaleX(0.893);">Styles</span>
<span class="t gl" style="top: 88.57px; left: 676.9px; transform-origin: 0px 50%; transform: scaleX(0.94);">Drawing</span>
<span class="t rb" style="top: 57.28px; left: 779.8px; transform-origin: 0px 50%; transform: scaleX(0.959);">Editing</span>
<!-- adobe -->
<span class="t rb" style="top: 58.68px; left: 827.4px; transform-origin: 0px 50%; transform: scaleX(0.897);">Create PDF</span>
<span class="t rb" style="top: 69.98px; left: 821.9px; transform-origin: 0px 50%; transform: scaleX(0.947);">and Share link</span>
<span class="t rb" style="top: 58.68px; left: 886.6px; transform-origin: 0px 50%; transform: scaleX(0.929);">Create PDF and</span>
<span class="t rb" style="top: 69.98px; left: 881.9px; transform-origin: 0px 50%; transform: scaleX(0.98);">Share via Outlook</span>
<span class="t gl" style="top: 88.57px; left: 861px; transform-origin: 0px 50%; transform: scaleX(0.937);">Adobe Acrobat</span>
<!-- voice etc -->
<span class="t rb" style="top: 58.68px; left: 967.2px; transform-origin: 0px 50%; transform: scaleX(0.985);">Dictate</span>
<span class="t gl" style="top: 88.57px; left: 971.5px; transform-origin: 0px 50%; transform: scaleX(0.911);">Voice</span>
<span class="t rb dis" style="top: 58.68px; left: 1010px; transform-origin: 0px 50%; transform: scaleX(0.968);">Sensitivity</span>
<span class="t gl" style="top: 88.57px; left: 1012px; transform-origin: 0px 50%; transform: scaleX(0.95);">Sensitivity</span>
<span class="t rb" style="top: 58.68px; left: 1065.2px; transform-origin: 0px 50%; transform: scaleX(1.019);">Add-ins</span>
<span class="t gl" style="top: 88.57px; left: 1067px; transform-origin: 0px 50%; transform: scaleX(0.952);">Add-ins</span>
<span class="t rb" style="top: 58.68px; left: 1123px; transform-origin: 0px 50%; transform: scaleX(0.964);">Design</span>
<span class="t rb" style="top: 69.98px; left: 1112px; transform-origin: 0px 50%; transform: scaleX(0.969);">Suggestions</span>
<span class="t rb" style="top: 58.68px; left: 1165.2px; transform-origin: 0px 50%; transform: scaleX(1.039);">Copilot</span>
<span class="t gl" style="top: 88.57px; left: 1140.4px; transform-origin: 0px 50%; transform: scaleX(0.98);">Copilot</span>
</div>
<svg class="i" style="left:0;top:0" width="1272" height="104" viewBox="0 0 1272 104" fill="none" stroke-linecap="round" stroke-linejoin="round">
<defs>


</defs>
<!-- Paste -->
<rect x="21.9" y="35.2" width="15.6" height="17.8" rx="1" stroke="#f0a23c" stroke-width="1.4" fill="#fffdf9"></rect>
<path d="M25.2 36.6v-1.8h2.2c0-2.6 4.4-2.6 4.4 0H34v1.8z" fill="#fff" stroke="#8a8a8a" stroke-width=".9"></path>
<rect x="31.8" y="41.4" width="9.8" height="13.2" rx=".8" fill="#fafafa" stroke="#6e6e6e" stroke-width="1.1"></rect>
<path d="M-2-1L0 1L2-1" fill="none" stroke-width=".95" transform="translate(29.5 75.2)" stroke="#444"></path>
<!-- Cut -->
<path d="M53.6 32.6l3.6 8M58.6 32.6l-3.6 8" stroke="#555" stroke-width=".9"></path>
<circle cx="53.6" cy="42.2" r="1.35" stroke="#2b88d8" stroke-width=".9"></circle><circle cx="58.4" cy="42.2" r="1.35" stroke="#2b88d8" stroke-width=".9"></circle>
<!-- Copy -->
<path d="M54.2 61.2H50.3V52h4.6l1.6 1.6" stroke="#555" stroke-width=".9"></path>
<path d="M54.2 54.2h4.6l2.7 2.7v6.3h-7.3z" stroke="#555" stroke-width=".9" fill="#fff"></path><path d="M56.2 59.6h3" stroke="#555" stroke-width=".8"></path>
<path d="M-2-1L0 1L2-1" fill="none" stroke-width=".95" transform="translate(73.2 57.8)" stroke="#444"></path>
<!-- Format painter -->
<path d="M50.4 77l5.2-4.6 3.6 4.4-4.2 4.6z" stroke="#e8812a" stroke-width="1" fill="#fde7cf"></path>
<path d="M56.2 72.6l2.2-1.6 2.6-.2.6 2.4-1.8 2.8" stroke="#666" stroke-width=".9"></path><path d="M52.6 78.6l3 .6" stroke="#e8812a" stroke-width=".8"></path>
<g transform="translate(82 93.2)" stroke="#777" stroke-width=".7" fill="none"><path d="M-2.600 2.200V-2.600H2.200"></path><path d="M-.4-.4L2.600 2.600M2.600.4V2.600H.4"></path></g>
<!-- New Slide -->
<rect x="99.6" y="35.8" width="19.6" height="13.8" stroke="#8c8c8c" stroke-width="1.6" fill="#fff"></rect>
<path d="M100.4 40.6h18M108.8 40.6v8.6" stroke="#9a9a9a" stroke-width="1"></path>
<rect x="98.4" y="31.8" width="9" height="6.2" fill="#fff" stroke="none"></rect>
<path d="M102.9 31.4v10M98 36.3h9.4" stroke="#21a366" stroke-width="1.1"></path>
<path d="M-2-1L0 1L2-1" fill="none" stroke-width=".95" transform="translate(119.6 74)" stroke="#444"></path>
<!-- New slide w copilot -->
<rect x="142.2" y="36" width="18.8" height="14.2" stroke="#7d7d7d" stroke-width="1.5" fill="#fff"></rect>
<rect x="143.6" y="37.4" width="16" height="11.4" stroke="#cfcfcf" stroke-width=".6"></rect>
<path d="M145.4 38.9h7.6M145.4 41.4h4.4" stroke="#8a8a8a" stroke-width=".8"></path>
<path d="M156 40.6c.5 3 1.7 4.2 4.7 4.7-3 .5-4.2 1.700-4.700 4.700-.5-3-1.700-4.200-4.700-4.700 3-.5 4.200-1.700 4.700-4.700z" fill="#d13b1c" stroke="#fff" stroke-width=".4"></path>
<path d="M159.800 48.600c.3 1.400.8 1.900 2.200 2.200-1.400.3-1.900.8-2.200 2.200-.3-1.400-.8-1.900-2.200-2.200 1.400-.3 1.900-.8 2.200-2.200z" fill="#d13b1c"></path>
<!-- small slide icons -->
<rect x="182.600" y="33" width="11" height="9.200" stroke="#666" stroke-width="1.100" fill="#fff"></rect><path d="M183 36h10.400M187.200 36v6" stroke="#777" stroke-width=".8"></path>
<path d="M-2-1L0 1L2-1" fill="none" stroke-width=".95" transform="translate(200.700 38)" stroke="#444"></path>
<rect x="182.600" y="53.400" width="11" height="8" stroke="#666" stroke-width="1.100" fill="#fff"></rect><path d="M189 55.600h3" stroke="#999" stroke-width=".8"></path>
<path d="M183.200 54.800l-1.800-1.800 1.800-1.800M181.600 53h2.800c1.600 0 2.400 1 2.400 2.600" stroke="#2b88d8" stroke-width="1"></path>
<path d="M182.400 71.200h11.400" stroke="#3fae5a" stroke-width="1.300" stroke-linecap="butt"></path>
<rect x="182.600" y="73.600" width="11" height="8.600" stroke="#666" stroke-width="1.100" fill="#fff"></rect><rect x="184.400" y="76.800" width="7.400" height="3.800" stroke="#aaa" stroke-width=".6"></rect>
<path d="M-2-1L0 1L2-1" fill="none" stroke-width=".95" transform="translate(200.700 76.800)" stroke="#444"></path>
<!-- font box chevrons -->
<path d="M-2-1L0 1L2-1" fill="none" stroke-width=".95" transform="translate(342 44.200)" stroke="#b5b5b5"></path><path d="M-2-1L0 1L2-1" fill="none" stroke-width=".95" transform="translate(377 44.200)" stroke="#b5b5b5"></path>
<g stroke="#b0b0b0" stroke-width=".9">
<!-- A^ Av Aclear -->
<path d="M387.200 47.400l3.800-9.400 3.800 9.400M388.600 44.200h4.800"></path><path d="M395.400 40.400l1.400-1.400 1.400 1.400" stroke-width=".7"></path>
<path d="M408.200 47.400l2.800-7 2.800 7M409.200 45h3.600"></path><path d="M414.400 39l1.400 1.400 1.400-1.400" stroke-width=".7"></path>
<path d="M422.400 35.200v17.400" stroke="#d6d6d6" stroke-width=".8"></path>
<path d="M427.400 47.400l3.600-9.400 2.400 6M429 44.200h3.400"></path><path d="M433 45.800l3.200-2.400 1.800 2.400-3.200 2.400z"></path>
<!-- kerning arrows -->
<path d="M321.800 72.600h10.600M323.200 71.400l-1.400 1.200 1.400 1.200M331 71.400l1.400 1.200-1.400 1.200" stroke-width=".7"></path>
<path d="M-2-1L0 1L2-1" fill="none" stroke-width=".95" transform="translate(339.500 67.900)"></path><path d="M-2-1L0 1L2-1" fill="none" stroke-width=".95" transform="translate(370.700 67.900)"></path>
<path d="M380.600 59v17" stroke="#e0e0e0" stroke-width=".8"></path>
<!-- highlighter -->
<path d="M388.600 69.600l1-2.600 5.200-5 2 2-5.200 5z"></path><path d="M388 70.200l1.400-1"></path>
<rect x="386" y="71.400" width="12" height="2.300" fill="#b8b8b8" stroke="none"></rect>
<path d="M-2-1L0 1L2-1" fill="none" stroke-width=".95" transform="translate(405.800 67.900)"></path>
<path d="M418.800 70l3.500-8 3.500 8M420.200 67.200h4.200"></path>
<rect x="416" y="71.400" width="12" height="2.300" fill="#b8b8b8" stroke="none"></rect>
<path d="M-2-1L0 1L2-1" fill="none" stroke-width=".95" transform="translate(436.200 67.900)"></path>
</g>
<g transform="translate(442 93.200)" opacity=".6" stroke="#777" stroke-width=".7" fill="none"><path d="M-2.600 2.200V-2.600H2.200"></path><path d="M-.4-.4L2.600 2.600M2.600.4V2.600H.4"></path></g>
<!-- paragraph -->
<g stroke="#b8b8b8" stroke-width="1" stroke-linecap="butt">
<path d="M457 38.900h1.400M457 43.500h1.400M457 48.100h1.400M461 38.900h7.400M461 43.500h7.400M461 48.100h7.400"></path>
<path d="M487.700 38.900h1.200M487.700 43.500h1.200M487.700 48.100h1.200M491.400 38.900h7.400M491.400 43.500h7.400M491.400 48.100h7.400"></path>
<path d="M518.300 39.200h10.700M523.600 42.100h5.400M523.600 45h5.400M518.300 48h10.700M518.400 43.600h4M519.800 42.200l-1.400 1.400 1.400 1.400" stroke-width=".9"></path>
<path d="M537.500 39.200h10.900M542.800 42.100h5.600M542.800 45h5.600M537.500 48h10.900M537.600 43.600h4M540.200 42.200l1.400 1.400-1.400 1.400" stroke-width=".9"></path>
<path d="M561 39.200h7.200M561 42.100h7.200M561 45h7.200M561 48h7.200M557.600 39.400v8.400M556.200 40.800l1.400-1.400 1.400 1.400M556.200 46.400l1.400 1.400 1.400-1.400" stroke-width=".9"></path>
<!-- align rows -->
<path d="M457.900 62.800h10.600M457.900 65.900h8M457.900 69h10.600M457.900 72h8"></path>
<path d="M476.900 62.800h10.900M478.400 65.900h8M476.900 69h10.900M478.400 72h8"></path>
<path d="M496.500 62.800h10.900M499.400 65.900h8M496.500 69h10.900M499.400 72h8"></path>
<path d="M516 62.800h10.600M516 65.900h10.600M516 69h10.600M516 72h10.600"></path>
<path d="M531.900 59.200v17.100" stroke="#dcdcdc" stroke-width=".8"></path>
<path d="M538.400 64.600h4M543.600 64.600h4M538.400 67.200h4M543.600 67.200h4M538.400 69.800h4M543.600 69.800h4" stroke-width=".7" stroke="#c8c8c8"></path>
</g>
<g stroke="#b5b5b5">
<path d="M-2-1L0 1L2-1" fill="none" stroke-width=".95" transform="translate(477 44.200)"></path><path d="M-2-1L0 1L2-1" fill="none" stroke-width=".95" transform="translate(507.500 44.200)"></path><path d="M-2-1L0 1L2-1" fill="none" stroke-width=".95" transform="translate(575 44.200)"></path><path d="M-2-1L0 1L2-1" fill="none" stroke-width=".95" transform="translate(555.200 68)"></path>
<path d="M-2-1L0 1L2-1" fill="none" stroke-width=".95" transform="translate(606.200 38.200)"></path><path d="M-2-1L0 1L2-1" fill="none" stroke-width=".95" transform="translate(606.200 57.400)"></path><path d="M-2-1L0 1L2-1" fill="none" stroke-width=".95" transform="translate(606.200 76.900)"></path>
</g>
<g stroke="#a8a8a8" stroke-width=".9">
<path d="M591 32.400v11M589.400 41.800l1.600 1.600 1.600-1.600M594 38.600l2-5.800 2 5.800M594.800 36.800h2.400M596 39.600v4M594.600 42.200l1.400 1.400 1.400-1.400" stroke-width=".8"></path>
<path d="M591.400 53.400h-2.600v7.600h2.600M596.800 53.400h2.600v7.600h-2.600M594.100 51.800v10.600M592.800 53.200l1.300-1.400 1.300 1.400M592.800 61l1.300 1.400 1.300-1.400M592 57.200h4.200" stroke-width=".8"></path>
<path d="M589.200 72.600h6l4 3.400M589.400 72.800l3.400 3.600-2.800 3.400" stroke-width="1.100"></path><rect x="593" y="76" width="6.600" height="5.200" fill="#fff"></rect><path d="M594.800 79h3" stroke-width=".7"></path>
</g>
<g transform="translate(615 93.200)" opacity=".6" stroke="#777" stroke-width=".7" fill="none"><path d="M-2.600 2.200V-2.600H2.200"></path><path d="M-.4-.4L2.600 2.600M2.600.4V2.600H.4"></path></g>
<!-- Shapes -->
<rect x="632.400" y="33" width="14" height="13.400" fill="#83bdf0" stroke="none"></rect><path d="M632.400 46.400V33h14" stroke="#2f7fd6" stroke-width="1.100" stroke-linecap="butt"></path>
<circle cx="645.800" cy="45.800" r="7" fill="#fff" stroke="#3b3b3b" stroke-width="1"></circle>
<path d="M-2-1L0 1L2-1" fill="none" stroke-width=".95" transform="translate(642.300 74)" stroke="#444"></path>
<!-- Arrange -->
<rect x="670.800" y="36.200" width="13.800" height="13.600" fill="#f9dc92" stroke="#e8912d" stroke-width="1.100"></rect>
<rect x="667.600" y="33" width="7.800" height="7.800" fill="#fafafa" stroke="#555" stroke-width="1"></rect>
<rect x="679.400" y="44.800" width="7.800" height="7.800" fill="#fafafa" stroke="#555" stroke-width="1"></rect>
<path d="M-2-1L0 1L2-1" fill="none" stroke-width=".95" transform="translate(677.200 74)" stroke="#444"></path>
<!-- Quick styles -->
<rect x="703.400" y="33" width="20" height="19.600" rx="1" fill="#f3f3f3" stroke="#d2d2d2" stroke-width="1"></rect>
<path d="M724.600 40.600c-4 3.600-7 7.200-9.400 11.200l-3 2c-.8.400-1.400 0-1-.8l1.200-2.800c3.400-3.600 7.600-7 11.400-10.200z" fill="#e2e2e2" stroke="#c2c2c2" stroke-width=".8"></path>
<path d="M-2-1L0 1L2-1" fill="none" stroke-width=".95" transform="translate(725.700 73.800)" stroke="#bbb"></path>
<!-- small drawing icons -->
<g stroke="#b4b4b4" stroke-width=".9">
<path d="M738.600 37.200l3.400-3.800 3.600 3.200-3.400 3.600zM745.600 36.600l1.200 2.200"></path><rect x="735.700" y="41.400" width="11.300" height="1.900" fill="#c4c4c4" stroke="none"></rect>
<path d="M736.400 52.600h6v6.600h-6zM741 58.200l1-2.600 4.600-4.400 1.600 1.600-4.600 4.400z" fill="#fff"></path><rect x="735.700" y="60.500" width="11.300" height="1.900" fill="#c4c4c4" stroke="none"></rect>
<path d="M736 77.400l3-4.600h7.600l-2.600 4.600zM736 77.400v2.200h8v-2.200M744 79.600l2.600-4.600v-2.200" fill="#e4e4e4"></path>
<path d="M-2-1L0 1L2-1" fill="none" stroke-width=".95" transform="translate(758.600 37.600)"></path><path d="M-2-1L0 1L2-1" fill="none" stroke-width=".95" transform="translate(758.600 57.500)"></path><path d="M-2-1L0 1L2-1" fill="none" stroke-width=".95" transform="translate(753.600 76.500)"></path>
</g>
<g transform="translate(767.200 93.300)" opacity=".6" stroke="#777" stroke-width=".7" fill="none"><path d="M-2.600 2.200V-2.600H2.200"></path><path d="M-.4-.4L2.600 2.600M2.600.4V2.600H.4"></path></g>
<!-- Editing -->
<circle cx="795.900" cy="38.700" r="7.300" stroke="#444" stroke-width="1"></circle><path d="M790.800 44l-8.200 8.600" stroke="#444" stroke-width="1"></path>
<path d="M-2-1L0 1L2-1" fill="none" stroke-width=".95" transform="translate(793 72.800)" stroke="#444"></path>
<!-- PDF icons -->
<g stroke="#4a7fe6" stroke-width="1">
<path d="M850 51.600h-5.800c-1 0-2-.8-2-2V36c0-1.200 1-2 2-2h8.600l4.200 4.200v6.200"></path>
<path d="M846 46.800c2-2.600 3.400-5.400 3.400-7.600 0-1.400-1.400-1.200-1.200.4.400 2.600 2.600 5 5.600 5.600 1 .2 1-.8 0-.8-2.600 0-5.600 1-7.800 2.400z" stroke-width=".7"></path>
<path d="M854.800 50.200l2.600-2.600c2.400-2.200 5.400.8 3.200 3.200l-1 1M857 49.200l-2.600 2.600c-2.400 2.200-5.400-.8-3.200-3.200" transform="translate(1.500 1.500)" stroke-width="1"></path>
<path d="M916.600 51.600H912c-1 0-2-.8-2-2V36c0-1.200 1-2 2-2h8.600l4.200 4.200v7.200"></path>
<path d="M913.800 46.800c2-2.600 3.400-5.400 3.400-7.600 0-1.400-1.400-1.200-1.200.4.400 2.600 2.600 5 5.600 5.600 1 .2 1-.8 0-.8-2.600 0-5.600 1-7.800 2.400z" stroke-width=".7"></path>
<rect x="918.600" y="47" width="10.200" height="7" rx="1" fill="#fff"></rect><path d="M918.800 47.600l4.900 3.600 4.900-3.600"></path>
</g>
<!-- mic -->
<rect x="977.200" y="32" width="8" height="13.800" rx="4" fill="#86c0ee" stroke="#2b7cd3" stroke-width="1"></rect>
<path d="M974.600 42.400c0 9 13.200 9 13.200 0M981.200 49.400v3.800" stroke="#444" stroke-width="1"></path>
<path d="M-2-1L0 1L2-1" fill="none" stroke-width=".95" transform="translate(980.800 75.300)" stroke="#444"></path>
<!-- sensitivity -->
<path d="M1021.800 35h11l-4 5 8 8v4.400h-15z" fill="#f0f0f0" stroke="#d4d4d4" stroke-width=".9"></path>
<path d="M1035.200 31.400l5.600 5.600-9.200 9.200-5.600-5.600z" fill="#e6e6e6" stroke="#cacaca" stroke-width=".9"></path><path d="M1037.600 31.800l2.800-1.200 1.200 1.200-1.200 2.800" stroke="#cacaca" stroke-width=".9"></path><path d="M1029.400 40.400l3.800 3.800M1031 38.800l3.800 3.800" stroke="#c6c6c6" stroke-width=".8"></path>
<path d="M-2-1L0 1L2-1" fill="none" stroke-width=".95" transform="translate(1029.400 74)" stroke="#c4c4c4"></path>
<!-- add-ins -->
<rect x="1070.200" y="32.400" width="21" height="20" rx="1.500" fill="#fdf1ec" stroke="#e4613a" stroke-width="1.200"></rect>
<g fill="#fff" stroke="#e4613a" stroke-width=".9"><rect x="1073" y="35" width="6.600" height="6.400"></rect><rect x="1081.800" y="35" width="6.600" height="6.400"></rect><rect x="1073" y="43.400" width="6.600" height="6.400"></rect><rect x="1081.800" y="43.400" width="6.600" height="6.400"></rect></g>
<!-- design suggestions -->
<rect x="1127" y="35.400" width="19" height="14.600" stroke="#8a8a8a" stroke-width="1.800" fill="#fcfcfc"></rect><path d="M1140.400 40.200v9.400M1128 40.200h18" stroke="#8a8a8a" stroke-width="1.200"></path>
<path d="M1128.800 31.200l4.800-.2-2.200 4.400 2.600-.2-9.400 10.600 3.400-7.400-2.800.2z" fill="#fff" stroke="#fff" stroke-width="2.600"></path><path d="M1128.800 31.200l4.800-.2-2.200 4.400 2.600-.2-9.400 10.600 3.400-7.400-2.800.2z" fill="#fbe08a" stroke="#f0961e" stroke-width=".8"></path>
<!-- collapse chevron -->
<path d="M1254.200 89l3.100 3.100 3.100-3.100" stroke="#444" stroke-width="1"></path>
</svg>
<!-- copilot logo -->
<svg class="i" style="left:1168.600px;top:32.500px" width="22.600" height="20.600" viewBox="0 0 22.600 20.600">
<defs><linearGradient id="cg1" x1="0" y1="0" x2="0" y2="1"><stop offset="0" stop-color="#1489ea"></stop><stop offset=".45" stop-color="#2fb6a0"></stop><stop offset=".75" stop-color="#b9cc2a"></stop><stop offset="1" stop-color="#f2c412"></stop></linearGradient>
<linearGradient id="cg2" x1="0" y1="0" x2="0" y2="1"><stop offset="0" stop-color="#a04ff2"></stop><stop offset=".45" stop-color="#ee4f92"></stop><stop offset="1" stop-color="#ff9a2e"></stop></linearGradient></defs>
<path d="M12.200.3h2.600c1.500 0 2.200.9 2.500 2l1 3.600h-4.500z" fill="#0b49c4"></path>
<path d="M10.400 20.300H7.800c-1.500 0-2.200-.9-2.500-2l-1-3.600h4.500z" fill="#f0542c"></path>
<path d="M5.200.3h8.200c1.600 0 2.300.8 1.800 2.400l-2 6.800-1.300 3.800c-.5 1.400-1.400 2-2.800 2H2.600C.9 15.300 0 14 .5 12.200L3 3C3.400 1.300 4 .3 5.200.3z" fill="url(#cg1)"></path>
<path d="M17.400 20.300H9.200c-1.600 0-2.300-.8-1.800-2.400l2-6.800 1.300-3.800c.5-1.400 1.400-2 2.800-2H20c1.700 0 2.600 1.300 2.100 3.100l-2.500 9.200c-.4 1.700-1 2.700-2.200 2.700z" fill="url(#cg2)"></path>
<path d="M11.600 6.200l-1.900 6.600c-.3.900-.8 1.500-1.500 1.800l2.800-.1 1.900-6.600c.3-.9.800-1.500 1.500-1.800z" fill="#fff"></path>
</svg>
<!-- font text glyphs -->
<span class="t" style="font-size: 10.3px; color: rgb(140, 140, 140); top: 61.88px; left: 227.5px; transform-origin: 0px 50%; transform: scaleX(0.8);">B</span>
<span class="t" style="font-size: 10.3px; color: rgb(140, 140, 140); font-family: &quot;Liberation Serif&quot;, serif; font-style: italic; top: 61.88px; left: 247.3px; transform-origin: 0px 50%; transform: scaleX(1.222);">I</span>
<span class="t u" style="font-size: 10.3px; color: rgb(140, 140, 140); top: 61.88px; left: 265.7px; transform-origin: 0px 50%; transform: scaleX(0.793);">U</span>
<span class="t" style="font-size: 10.3px; color: rgb(140, 140, 140); top: 61.88px; left: 285.3px; transform-origin: 0px 50%; transform: scaleX(0.727);">S</span>
<span class="t" style="font-size: 8.5px; color: rgb(168, 168, 168); text-decoration: line-through; top: 63.2px; left: 302.5px; transform-origin: 0px 50%; transform: scaleX(1.003);">ab</span>
<span class="t" style="font-size: 9px; color: rgb(156, 156, 156); top: 61.98px; left: 321.4px; transform-origin: 0px 50%; transform: scaleX(0.996);">AV</span>
<span class="t" style="font-size: 10px; color: rgb(156, 156, 156); top: 62.13px; left: 353px; transform-origin: 0px 50%; transform: scaleX(0.924);">Aa</span>
<!-- edit area -->
<div class="a" style="left:302px;top:102.5px;width:882px;height:11px;background:#fdfdfd"></div>
<span class="t rn" style="top: 104.65px; left: 343.41px; transform: scaleX(1.002);">6</span>
<span class="t rn" style="top: 104.65px; left: 409.51px; transform: scaleX(1.002);">5</span>
<span class="t rn" style="top: 104.65px; left: 475.71px; transform: scaleX(1.002);">4</span>
<span class="t rn" style="top: 104.65px; left: 541.91px; transform: scaleX(1.002);">3</span>
<span class="t rn" style="top: 104.65px; left: 608.11px; transform: scaleX(1.002);">2</span>
<span class="t rn" style="top: 104.65px; left: 674.21px; transform: scaleX(1.002);">1</span>
<span class="t rn" style="top: 104.65px; left: 740.41px; transform: scaleX(1.002);">0</span>
<span class="t rn" style="top: 104.65px; left: 806.61px; transform: scaleX(1.002);">1</span>
<span class="t rn" style="top: 104.65px; left: 872.71px; transform: scaleX(1.002);">2</span>
<span class="t rn" style="top: 104.65px; left: 938.91px; transform: scaleX(1.002);">3</span>
<span class="t rn" style="top: 104.65px; left: 1005.11px; transform: scaleX(1.002);">4</span>
<span class="t rn" style="top: 104.65px; left: 1071.21px; transform: scaleX(1.002);">5</span>
<span class="t rn" style="top: 104.65px; left: 1137.41px; transform: scaleX(1.002);">6</span>
<svg class="i" style="left:0;top:0" width="1272" height="120" viewBox="0 0 1272 120"><path d="M304.1 107.500v1.200M312.4 106.400v3.200M320.7 107.500v1.200M328.9 107.500v1.200M337.2 107.500v1.200M353.8 107.500v1.200M362.0 107.500v1.200M370.3 107.500v1.200M378.6 106.400v3.200M386.8 107.500v1.200M395.1 107.500v1.200M403.4 107.500v1.200M419.9 107.500v1.200M428.2 107.500v1.200M436.5 107.500v1.200M444.7 106.400v3.200M453.0 107.500v1.200M461.3 107.500v1.200M469.5 107.500v1.200M486.1 107.500v1.200M494.4 107.500v1.200M502.6 107.500v1.200M510.9 106.400v3.200M519.2 107.500v1.200M527.4 107.500v1.200M535.7 107.500v1.200M552.3 107.500v1.200M560.5 107.500v1.200M568.8 107.500v1.200M577.1 106.400v3.200M585.3 107.500v1.200M593.6 107.500v1.200M601.9 107.500v1.200M618.4 107.500v1.200M626.7 107.500v1.200M635.0 107.500v1.200M643.2 106.400v3.200M651.5 107.500v1.200M659.8 107.500v1.200M668.1 107.500v1.200M684.6 107.500v1.200M692.9 107.500v1.200M701.1 107.500v1.200M709.4 106.400v3.200M717.7 107.500v1.200M726.0 107.500v1.200M734.2 107.500v1.200M750.8 107.500v1.200M759.0 107.500v1.200M767.3 107.500v1.200M775.6 106.400v3.200M783.9 107.500v1.200M792.1 107.500v1.200M800.4 107.500v1.200M816.9 107.500v1.200M825.2 107.500v1.200M833.5 107.500v1.200M841.8 106.400v3.200M850.0 107.500v1.200M858.3 107.500v1.200M866.6 107.500v1.200M883.1 107.500v1.200M891.4 107.500v1.200M899.7 107.500v1.200M907.9 106.400v3.200M916.2 107.500v1.200M924.5 107.500v1.200M932.7 107.500v1.200M949.3 107.500v1.200M957.6 107.500v1.200M965.8 107.500v1.200M974.1 106.400v3.200M982.4 107.500v1.200M990.6 107.500v1.200M998.9 107.500v1.200M1015.5 107.500v1.200M1023.7 107.500v1.200M1032.0 107.500v1.200M1040.3 106.400v3.200M1048.5 107.500v1.200M1056.8 107.500v1.200M1065.1 107.500v1.200M1081.6 107.500v1.200M1089.9 107.500v1.200M1098.2 107.500v1.200M1106.4 106.400v3.200M1114.7 107.500v1.200M1123.0 107.500v1.200M1131.2 107.500v1.200M1147.8 107.500v1.200M1156.1 107.500v1.200M1164.3 107.500v1.200M1172.6 106.400v3.200M1180.9 107.500v1.200" stroke="#a4a4a4" stroke-width=".7" fill="none"></path></svg>
<div class="a" style="left:208.800px;top:154px;width:10px;height:496px;background:#fdfdfd"></div>
<svg class="i" style="left:0;top:0" width="230" height="720" viewBox="0 0 230 720"><path d="M213 161.6h1.200M211.500 169.9h4M213 178.2h1.200M213 186.4h1.200M213 194.7h1.200M213 211.3h1.200M213 219.5h1.200M213 227.8h1.200M211.500 236.1h4M213 244.3h1.200M213 252.6h1.200M213 260.9h1.200M213 277.4h1.200M213 285.7h1.200M213 294.0h1.200M211.500 302.2h4M213 310.5h1.200M213 318.8h1.200M213 327.1h1.200M213 343.6h1.200M213 351.9h1.200M213 360.1h1.200M211.500 368.4h4M213 376.7h1.200M213 385.0h1.200M213 393.2h1.200M213 409.8h1.200M213 418.0h1.200M213 426.3h1.200M211.500 434.6h4M213 442.9h1.200M213 451.1h1.200M213 459.4h1.200M213 475.9h1.200M213 484.2h1.200M213 492.5h1.200M211.500 500.8h4M213 509.0h1.200M213 517.3h1.200M213 525.6h1.200M213 542.1h1.200M213 550.4h1.200M213 558.7h1.200M211.500 566.9h4M213 575.2h1.200M213 583.5h1.200M213 591.7h1.200M213 608.3h1.200M213 616.6h1.200M213 624.8h1.200M211.500 633.1h4M213 641.4h1.200M213 649.6h1.200" stroke="#a4a4a4" stroke-width=".7" fill="none"></path></svg>
<span class="t rn" style="left:211.300px;top:199.0px;transform:rotate(-90deg)">3</span>
<span class="t rn" style="left:211.300px;top:265.2px;transform:rotate(-90deg)">2</span>
<span class="t rn" style="left:211.300px;top:331.3px;transform:rotate(-90deg)">1</span>
<span class="t rn" style="left:211.300px;top:397.5px;transform:rotate(-90deg)">0</span>
<span class="t rn" style="left:211.300px;top:463.7px;transform:rotate(-90deg)">1</span>
<span class="t rn" style="left:211.300px;top:529.8px;transform:rotate(-90deg)">2</span>
<span class="t rn" style="left:211.300px;top:596.0px;transform:rotate(-90deg)">3</span>
<!-- copilot button -->
<div class="a" style="left:301.600px;top:123.800px;width:23.400px;height:23.200px;background:#fff;border-radius:5.500px;box-shadow:0 0 1px rgba(0,0,0,.2)"></div>
<svg class="i" style="left:306px;top:129px" width="14" height="13" viewBox="0 0 14 13" fill="none" stroke="#444" stroke-width=".9"><rect x="1.600" y="1.300" width="7.800" height="8" rx="3.200" transform="rotate(12 5.500 5.300)"></rect><rect x="4.800" y="3.300" width="7.800" height="8" rx="3.200" transform="rotate(12 8.700 7.300)"></rect><path d="M7.800 4.200L6.400 6.800h1.500L6.600 9.200" stroke-width=".7"></path></svg>
<!-- slide -->
<div class="a" style="left:301.500px;top:152.800px;width:882.300px;height:497.300px;background:#fff;box-shadow:0 0 0 .7px #dcdad8,0 0 2px rgba(0,0,0,.12)"></div>
<div id="slide" class="a" style="left:0;top:0;width:1272px;height:720px">
<div class="a" style="left:319.400px;top:172.800px;width:846.600px;height:458.200px;background:#f4f4f4"></div>
<span class="t" style="font-size: 25.6px; color: rgb(62, 62, 62); font-family: &quot;DejaVu Sans Light&quot;, &quot;DejaVu Sans&quot;, &quot;Liberation Sans&quot;, sans-serif; font-weight: 200; -webkit-text-stroke: 0.28px rgb(62, 62, 62); top: 201.83px; left: 345.8px; transform-origin: 0px 50%; transform: scaleX(0.858);">Setting up Morph</span>
<div class="a" style="left:345.800px;top:239.300px;width:794.400px;height:1.900px;background:#d24726"></div>
<span class="t sl" style="top: 265.59px; left: 346.7px; transform-origin: 0px 50%; transform: scaleX(0.984);">Try it yourself with these two simple “planets”:</span>
<div class="a" style="left:346.700px;top:292.4px;width:29.600px;height:29.600px;border-radius:50%;background:#d24726"></div>
<span class="t" style="font-size: 15.5px; color: rgb(255, 255, 255); top: 299.68px; left: 357.19px; transform: scaleX(1.002);">1</span>
<span class="t sl" style="top: 302.29px; left: 385.3px; transform-origin: 0px 50%; transform: scaleX(0.978);">Duplicate this slide: Right-click the</span>
<span class="t sl" style="top: 318.59px; left: 385.3px; transform-origin: 0px 50%; transform: scaleX(0.982);">slide thumbnail and select</span>
<span class="t sl" style="top: 335.09px; left: 385.3px; transform-origin: 0px 50%; transform: scaleX(0.921);"><span class="or">Duplicate Slide</span>.</span>
<div class="a" style="left:346.700px;top:363.4px;width:29.600px;height:29.600px;border-radius:50%;background:#d24726"></div>
<span class="t" style="font-size: 15.5px; color: rgb(255, 255, 255); top: 370.68px; left: 357.19px; transform: scaleX(1.002);">2</span>
<span class="t sl" style="top: 373.09px; left: 385.3px; transform-origin: 0px 50%; transform: scaleX(0.982);">In the second of these two identical</span>
<span class="t sl" style="top: 389.49px; left: 385.3px; transform-origin: 0px 50%; transform: scaleX(0.961);">slides, change the shapes on the</span>
<span class="t sl" style="top: 405.99px; left: 385.3px; transform-origin: 0px 50%; transform: scaleX(0.962);">right in some way (move, resize,</span>
<span class="t sl" style="top: 422.59px; left: 385.3px; transform-origin: 0px 50%; transform: scaleX(0.983);">change color), then go to</span>
<span class="t sl" style="top: 438.99px; left: 385.3px; transform-origin: 0px 50%; transform: scaleX(0.94);"><span class="or">Transitions</span> &gt; <span class="or">Morph</span>.</span>
<div class="a" style="left:346.700px;top:466.4px;width:29.600px;height:29.600px;border-radius:50%;background:#d24726"></div>
<span class="t" style="font-size: 15.5px; color: rgb(255, 255, 255); top: 473.68px; left: 357.19px; transform: scaleX(1.002);">3</span>
<span class="t sl" style="top: 476.09px; left: 385.3px; transform-origin: 0px 50%; transform: scaleX(0.993);">Return to the first of the two slides</span>
<span class="t sl" style="top: 492.79px; left: 385.3px; transform-origin: 0px 50%; transform: scaleX(0.967);">and press <span class="or">Slide Show</span> button and then</span>
<span class="t sl" style="top: 509.09px; left: 385.3px; transform-origin: 0px 50%; transform: scaleX(0.968);">select <span class="or">Play</span> to see your circle morph!</span>
<span class="t sl" style="top: 582.79px; left: 346.7px; transform-origin: 0px 50%; transform: scaleX(0.992);"><span class="or" style="font-weight:normal">Hint:</span> <b>Effect Options</b> gives you even more</span>
<span class="t sl" style="top: 599.29px; left: 346.7px; transform-origin: 0px 50%; transform: scaleX(1.007);">options for <b>Morph</b>.</span>
<div class="a" style="left:757.400px;top:260.500px;width:1px;height:352px;background:#ebebeb"></div>
<!-- slide pictures -->
<div class="a" style="left:628.700px;top:261.700px;width:65px;height:110px;background:#fdfdfd;border:1px solid #d6d6d6;border-bottom:none;-webkit-mask-image:linear-gradient(#000 78%,transparent);mask-image:linear-gradient(#000 78%,transparent)"></div>
<div class="a" style="left:630px;top:281px;width:63px;height:7.500px;background:#ececec"></div>
<span class="t" style="font-size: 4.5px; color: rgb(119, 119, 119); top: 264.79px; left: 641px; transform-origin: 0px 50%; transform: scaleX(0.855);">Cut</span>
<span class="t" style="font-size: 4.5px; color: rgb(119, 119, 119); top: 274.39px; left: 641px; transform-origin: 0px 50%; transform: scaleX(0.951);">Copy</span>
<span class="t" style="font-size: 4.5px; color: rgb(153, 153, 153); top: 282.59px; left: 655px; transform-origin: 0px 50%; transform: scaleX(0.61);">Paste Options:</span>
<span class="t" style="font-size: 4.5px; color: rgb(187, 187, 187); top: 354.09px; left: 641px; transform-origin: 0px 50%; transform: scaleX(1.046);">Check for Updates</span>
<div class="a" style="left:597px;top:276px;width:86px;height:86px;border-radius:50%;background:#fbfbfb;border:4.500px solid #c9c9c9"></div>
<div class="a" style="left:608.800px;top:311.400px;width:67px;height:13px;background:#bdbdbd"></div>
<div class="a" style="left:675px;top:311.400px;width:18.500px;height:13px;background:#c4c4c4"></div>
<svg class="i" style="left:0;top:0" width="1272" height="720" viewBox="0 0 1272 720" fill="none">
<path d="M630.500 264.500l3 5M633.500 264.500l-3 5" stroke="#555" stroke-width=".7"></path><circle cx="630.600" cy="270" r=".8" stroke="#2b88d8" stroke-width=".6"></circle><circle cx="633.400" cy="270" r=".8" stroke="#2b88d8" stroke-width=".6"></circle>
<path d="M631 274h3v4h-3zM632.500 275.500h3v4h-3z" stroke="#666" stroke-width=".6" fill="#fff"></path>
<rect x="627.500" y="283.500" width="8" height="9" stroke="#e8a23c" stroke-width="1" fill="#fff"></rect><path d="M631 286h5M631 288h5M631 290h5" stroke="#999" stroke-width=".6"></path><rect x="633" y="288" width="4" height="5" fill="#fff" stroke="#666" stroke-width=".6"></rect>
<rect x="645.500" y="284.500" width="8" height="8" stroke="#e8a23c" stroke-width="1" fill="#fff"></rect><rect x="649" y="287.500" width="6.500" height="5" fill="#dfeaf6" stroke="#888" stroke-width=".6"></rect><path d="M649.500 292l2-2.400 1.500 1.400 1-.8 1.500 1.800z" fill="#2e75b6"></path>
<rect x="612.500" y="299.500" width="8" height="7" stroke="#999" stroke-width=".8" fill="#f3f3f3"></rect><path d="M611 298l2.400 2.400M613.400 298l-2.400 2.400" stroke="#e8a23c" stroke-width=".7"></path>
<rect x="613.500" y="315" width="7" height="6" stroke="#aaa" stroke-width=".7" fill="#eee"></rect><rect x="611.500" y="313.500" width="6" height="5" fill="#f6f6f6" stroke="#ccc" stroke-width=".5"></rect><circle cx="612" cy="314" r="1.200" fill="#f3c37a"></circle>
<rect x="611.500" y="328.500" width="8" height="7" stroke="#888" stroke-width=".8" fill="#fafafa"></rect><path d="M615 330.500l5.500 5.500M620.500 330.500l-5.500 5.500" stroke="#e23b2e" stroke-width="1"></path>
<path d="M613 343.500h7v5.500" stroke="#e8a23c" stroke-width="1"></path><path d="M615 346.500h5" stroke="#e8a23c" stroke-width=".8"></path>
<path d="M631 288.600h62M631 302.300h62M631 340h62M631 362h62" stroke="#e2e2e2" stroke-width=".5"></path>
</svg>
<span class="t" style="font-size: 7.6px; color: rgb(119, 119, 119); top: 299.62px; left: 626.3px; transform-origin: 0px 50%; transform: scaleX(0.942);"><span class="u">N</span>ew Slide</span>
<span class="t" style="font-size: 7.6px; color: rgb(38, 38, 38); top: 313.92px; left: 626.3px; transform-origin: 0px 50%; transform: scaleX(0.952);">Duplicate Slide</span>
<span class="t" style="font-size: 7.6px; color: rgb(138, 138, 138); top: 328.42px; left: 626.3px; transform-origin: 0px 50%; transform: scaleX(0.945);">Delete Slide</span>
<span class="t" style="font-size: 7.6px; color: rgb(119, 119, 119); top: 342.92px; left: 626.3px; transform-origin: 0px 50%; transform: scaleX(1.018);">Add Section</span>
<!-- ribbon picture -->
<div class="a" style="left:577.300px;top:393.500px;width:161px;height:66px;-webkit-mask-image:linear-gradient(90deg,#000 86%,transparent 100%),linear-gradient(#000 82%,transparent 100%);-webkit-mask-composite:source-in;mask-image:linear-gradient(90deg,#000 86%,transparent 100%),linear-gradient(#000 82%,transparent 100%);mask-composite:intersect">
 <div class="a" style="left:0;top:0;width:161px;height:22px;background:#b7472a"></div>
 <div class="a" style="left:0;top:22px;width:161px;height:44px;background:#f1f1f1"></div>
 <div class="a" style="left:20px;top:22px;width:141px;height:25px;background:#fff"></div>
 <div class="a" style="left:85px;top:12px;width:29px;height:11px;background:#f1f1f1"></div>
 <div class="a" style="left:4px;top:26px;width:11px;height:9px;background:#c6dcf0;border:.5px solid #8fb4dc"></div>
 <div class="a" style="left:30px;top:27px;width:13px;height:10px;background:#c3d9ef;border:.5px solid #a3c0de"></div>
 <div class="a" style="left:93px;top:27px;width:11px;height:9px;background:#2e75b6"></div>
 <div class="a" style="left:124px;top:28px;width:11px;height:9px;background:#7fa8d6;border:.5px solid #a9c4e2"></div>
 <div class="a" style="left:155px;top:27px;width:8px;height:10px;background:#c3d9ef"></div>
</div>
<span class="t" style="font-size: 4.5px; color: rgb(230, 184, 170); top: 408.59px; left: 585px; transform-origin: 0px 50%; transform: scaleX(1.101);">File</span>
<span class="t" style="font-size: 4.5px; color: rgb(230, 184, 170); top: 408.59px; left: 605px; transform-origin: 0px 50%; transform: scaleX(1.082);">Home</span>
<span class="t" style="font-size: 4.5px; color: rgb(230, 184, 170); top: 408.59px; left: 626px; transform-origin: 0px 50%; transform: scaleX(1.065);">Insert</span>
<span class="t" style="font-size: 4.5px; color: rgb(201, 84, 58); top: 408.59px; left: 666px; transform-origin: 0px 50%; transform: scaleX(0.916);">Transitions</span>
<span class="t" style="font-size: 4.5px; color: rgb(240, 207, 197); top: 408.59px; left: 695px; transform-origin: 0px 50%; transform: scaleX(1.033);">Animations</span>
<span class="t" style="font-size: 4.5px; color: rgb(219, 167, 154); top: 408.59px; left: 726px; transform-origin: 0px 50%; transform: scaleX(1.098);">Slide</span>
<span class="t" style="font-size: 4.3px; color: rgb(119, 119, 119); top: 431.69px; left: 579px; transform-origin: 0px 50%; transform: scaleX(0.981);">Preview</span>
<span class="t" style="font-size: 4.3px; color: rgb(170, 170, 170); top: 444.69px; left: 580px; transform-origin: 0px 50%; transform: scaleX(0.915);">Preview</span>
<span class="t" style="font-size: 4.3px; color: rgb(102, 102, 102); top: 432.69px; left: 608px; transform-origin: 0px 50%; transform: scaleX(1.07);">None</span>
<span class="t" style="font-size: 4.3px; color: rgb(119, 119, 119); top: 432.69px; left: 672px; transform-origin: 0px 50%; transform: scaleX(1.047);">Cut</span>
<span class="t" style="font-size: 4.3px; color: rgb(119, 119, 119); top: 432.69px; left: 702px; transform-origin: 0px 50%; transform: scaleX(1.021);">Fade</span>
<svg class="i" style="left:0;top:0" width="1272" height="720" viewBox="0 0 1272 720" fill="none" stroke="#fff" stroke-width=".8">
<rect x="585.500" y="397.500" width="5" height="4.500" fill="#fff" stroke="none"></rect><path d="M604.500 400c2-2.500 5-1 4 2M604 398v2.400h2.400"></path><path d="M649 398h5M650 399.500l1.500 3 1.500-3" stroke-width=".6"></path>
</svg>
<div class="a" style="left:622px;top:407px;width:48px;height:48px;border-radius:50%;background:#f4f4f4;border:3px solid #c9c9c9"></div>
<div class="a" style="left:637.500px;top:417px;width:17px;height:15px;background:#c3d9ef;border:.6px solid #9cbbdc"></div>
<div class="a" style="left:639.500px;top:419px;width:7px;height:6px;background:#2e75b6"></div>
<div class="a" style="left:644.500px;top:422.500px;width:5px;height:5px;background:#6f9fd0;transform:rotate(40deg)"></div>
<div class="a" style="left:648px;top:425.500px;width:5px;height:4.500px;background:#8fb4dc"></div>
<span class="t" style="font-size: 7.5px; color: rgb(85, 85, 85); top: 435.28px; left: 636px; transform-origin: 0px 50%; transform: scaleX(0.94);">Morph</span>
<!-- slideshow bar -->
<div class="a" style="left:612px;top:486px;width:117.500px;height:29px;background:linear-gradient(90deg,rgba(0,0,0,0),rgba(0,0,0,.16) 40%);filter:blur(1px)"></div>
<div class="a" style="left:599px;top:484px;width:129px;height:30px;background:linear-gradient(#f6f6f6 0%,#ececec 55%,#dedede 100%);-webkit-mask-image:linear-gradient(90deg,transparent,#000 22%);mask-image:linear-gradient(90deg,transparent,#000 22%)"></div>
<svg class="i" style="left:0;top:0" width="1272" height="720" viewBox="0 0 1272 720" fill="none" stroke="#999" stroke-width=".6">
<path d="M676 509h28M682 507v4M702.500 507.500v3M701 509h3"></path><rect x="617" y="506" width="4" height="4.500"></rect><rect x="628" y="506" width="4" height="4.500"></rect><rect x="720" y="506.500" width="4" height="4"></rect>
</svg>
<span class="t" style="font-size: 4px; color: rgb(153, 153, 153); top: 506.85px; left: 709px; transform-origin: 0px 50%; transform: scaleX(0.977);">120%</span>
<div class="a" style="left:629.700px;top:481.700px;width:46.600px;height:46.600px;border-radius:50%;background:#f1f1f1;border:3px solid #c9c9c9"></div>
<svg class="i" style="left:0;top:0" width="1272" height="720" viewBox="0 0 1272 720" fill="none" stroke="#5a5a5a" stroke-width="1.200">
<path d="M642 496.500h22M645 497v9.500h16v-9.500M649 501h8M653 506.500v8M649 514.500h8"></path>
</svg>
<!-- donut -->
<div class="a" style="left:825.300px;top:294.100px;width:276.800px;height:270.800px;border-radius:50%;background:#2e75b6"></div>
<div class="a" style="left:886.700px;top:355.500px;width:155.800px;height:152px;border-radius:50%;background:#bdd7ee"></div>
</div>
<!-- gridlines -->
<div id="grid">
<div class="gv" style="left:345.0px"></div>
<div class="gv gf" style="left:411.1px"></div>
<div class="gv" style="left:477.3px"></div>
<div class="gv gf" style="left:543.5px"></div>
<div class="gv" style="left:609.7px"></div>
<div class="gv gf" style="left:675.8px"></div>
<div class="gv" style="left:742.0px"></div>
<div class="gv gf" style="left:808.2px"></div>
<div class="gv" style="left:874.3px"></div>
<div class="gv gf" style="left:940.5px"></div>
<div class="gv" style="left:1006.7px"></div>
<div class="gv gf" style="left:1072.8px"></div>
<div class="gv" style="left:1139.0px"></div>
<div class="gh" style="top:202.5px"></div>
<div class="gh" style="top:268.7px"></div>
<div class="gh" style="top:334.8px"></div>
<div class="gh" style="top:401.0px"></div>
<div class="gh" style="top:467.2px"></div>
<div class="gh" style="top:533.3px"></div>
<div class="gh" style="top:599.5px"></div>
</div>
<!-- context menu -->
<div id="menu">
<div class="a" style="left:138.500px;top:247.200px;width:166px;height:363.500px;background:#fff;border:1.300px solid #7a7a7a;border-radius:4px;box-shadow:1px 2px 5px rgba(0,0,0,.25)"></div>
<div class="a" style="left:142.200px;top:251.200px;width:159px;height:16.400px;background:#fff;border:1px solid #bdbdbd"></div>
<span class="t" style="font-size: 9.3px; color: rgb(118, 118, 118); top: 254.71px; left: 146.7px; transform-origin: 0px 50%; transform: scaleX(0.816);">Search the menus</span>
<div class="a" style="left:140px;top:451.500px;width:163px;height:22px;background:#f3f3f3"></div>
<div class="msep" style="top:361.400px"></div><div class="msep" style="top:451.300px"></div><div class="msep" style="top:518.300px"></div><div class="msep" style="top:564px"></div><div class="msep" style="top:587px"></div>
<div class="a" style="left:0;top:.6px">
<span class="t mi" style="top: 277.73px; left: 166.8px; transform-origin: 0px 50%; transform: scaleX(0.884);">Cu<span class="u">t</span></span>
<span class="t mi" style="top: 299.63px; left: 166.8px; transform-origin: 0px 50%; transform: scaleX(0.935);"><span class="u">C</span>opy</span>
<span class="t mi" style="font-weight: bold; color: rgb(31, 31, 31); top: 322.13px; left: 167.6px; transform-origin: 0px 50%; transform: scaleX(0.928);">Paste Options:</span>
<span class="t mi" style="top: 369.33px; left: 166.8px; transform-origin: 0px 50%; transform: scaleX(0.925);"><span class="u">N</span>ew Slide</span>
<span class="t mi" style="top: 391.33px; left: 166.8px; transform-origin: 0px 50%; transform: scaleX(0.943);">Duplic<span class="u">a</span>te Slide</span>
<span class="t mi" style="top: 413.23px; left: 166.8px; transform-origin: 0px 50%; transform: scaleX(0.927);"><span class="u">D</span>elete Slide</span>
<span class="t mi" style="top: 435.13px; left: 166.8px; transform-origin: 0px 50%; transform: scaleX(0.961);"><span class="u">A</span>dd Section</span>
<span class="t mi" style="top: 458.43px; left: 166.8px; transform-origin: 0px 50%; transform: scaleX(0.938);"><span class="u">L</span>ayout</span>
<span class="t mi" style="top: 480.83px; left: 166.8px; transform-origin: 0px 50%; transform: scaleX(0.902);"><span class="u">R</span>eset Slide</span>
<span class="t mi" style="top: 502.73px; left: 166.8px; transform-origin: 0px 50%; transform: scaleX(0.942);">Format <span class="u">B</span>ackground...</span>
<span class="t mi" style="color: rgb(185, 185, 185); top: 525.63px; left: 166.8px; transform-origin: 0px 50%; transform: scaleX(0.971);"><span class="u">P</span>hoto Album...</span>
<span class="t mi" style="top: 547.63px; left: 166.8px; transform-origin: 0px 50%; transform: scaleX(0.937);"><span class="u">H</span>ide Slide</span>
<span class="t mi" style="top: 571.13px; left: 166.8px; transform-origin: 0px 50%; transform: scaleX(0.948);">Lin<span class="u">k</span> to this Slide</span>
<span class="t mi" style="top: 594.33px; left: 166.8px; transform-origin: 0px 50%; transform: scaleX(0.963);">New Co<span class="u">m</span>ment</span>
<svg class="i" style="left:0;top:0" width="320" height="720" viewBox="0 0 320 720" fill="none" stroke-linecap="round" stroke-linejoin="round">
<!-- cut -->
<path d="M151.800 275.800l4.200 8.600M157 275.800l-4.200 8.600" stroke="#555" stroke-width=".9"></path><circle cx="151.800" cy="286" r="1.300" stroke="#2b88d8" stroke-width=".9"></circle><circle cx="156.900" cy="286" r="1.300" stroke="#2b88d8" stroke-width=".9"></circle>
<!-- copy -->
<path d="M152.600 306.600h-4.200v-9.400h4.800l1.800 1.800" stroke="#555" stroke-width=".9"></path><path d="M152.600 299.400h4.600l2.600 2.600v7h-7.200z" stroke="#555" stroke-width=".9" fill="#fff"></path><path d="M154.600 305h3" stroke="#555" stroke-width=".8"></path>
<!-- paste small -->
<rect x="150" y="319.800" width="8" height="10" stroke="#f0a23c" stroke-width="1.100"></rect><path d="M152 320.400v-1.200h1c0-1.600 2.400-1.600 2.400 0h1v1.200z" fill="#fff" stroke="#8a8a8a" stroke-width=".7"></path><rect x="155" y="324" width="4.400" height="6.400" fill="#fff" stroke="#666" stroke-width=".8"></rect>
<!-- paste opt 1 -->
<rect x="168.600" y="342.400" width="11.200" height="13.600" stroke="#f0a23c" stroke-width="1.200" fill="#fffaf3"></rect><path d="M171 343.400v-1.600h1.800c0-2 3-2 3 0h1.800v1.600z" fill="#fff" stroke="#8a8a8a" stroke-width=".8"></path><rect x="176" y="348" width="6.600" height="8.800" fill="#f6f6f6" stroke="#666" stroke-width="1"></rect>
<!-- paste opt 2 -->
<rect x="190.800" y="342.400" width="11.200" height="13.600" stroke="#f0a23c" stroke-width="1.200" fill="#fffaf3"></rect><path d="M193.200 343.400v-1.600h1.800c0-2 3-2 3 0h1.800v1.600z" fill="#fff" stroke="#8a8a8a" stroke-width=".8"></path><rect x="194.600" y="349.400" width="10" height="7.400" fill="#eaf2fb" stroke="#555" stroke-width=".9"></rect><path d="M195 356.400l3-3.600 2.200 2 1.600-1.400 2.400 3z" fill="#2f7fd6" stroke="none"></path>
<!-- new slide -->
<rect x="149" y="366.600" width="10.400" height="8.800" stroke="#777" stroke-width="1.200" fill="#fff"></rect><path d="M149.400 369.800h9.600M153.600 369.800v5.400" stroke="#999" stroke-width=".8"></path><rect x="147.600" y="364" width="4.400" height="4" fill="#fff"></rect><path d="M150.200 363.800v5M147.800 366.300h4.800" stroke="#21a366" stroke-width="1"></path>
<!-- duplicate -->
<rect x="148.600" y="390" width="8.200" height="6.400" stroke="#666" stroke-width="1.100" fill="#fff"></rect><rect x="151.200" y="393.400" width="8.400" height="6.600" stroke="#666" stroke-width="1.100" fill="#fff"></rect><rect x="153" y="396" width="4.800" height="2.200" stroke="#aaa" stroke-width=".6"></rect>
<!-- delete -->
<path d="M159.400 415v-2.600h-10.600v8.600h6" stroke="#666" stroke-width="1.200"></path><path d="M156 416.600l4.200 4.200M160.200 416.600l-4.200 4.200" stroke="#e23b2e" stroke-width="1"></path>
<!-- add section -->
<path d="M148.600 433.800h10.800" stroke="#3fae5a" stroke-width="1.300" stroke-linecap="butt"></path><rect x="148.800" y="436" width="10.400" height="8.400" stroke="#666" stroke-width="1.100" fill="#fff"></rect><rect x="150.600" y="439.400" width="6.800" height="3.400" stroke="#aaa" stroke-width=".6"></rect>
<!-- layout -->
<rect x="148.800" y="458" width="10.600" height="9.400" stroke="#666" stroke-width="1.100" fill="#fff"></rect><path d="M149.200 461.200h9.800M153.600 461.200v5.800" stroke="#777" stroke-width=".8"></path>
<path d="M293.400 457.900l3.500 3.700-3.500 3.700" stroke="#555" stroke-width="1.200"></path>
<!-- reset -->
<rect x="149" y="481.400" width="10.400" height="8.400" stroke="#666" stroke-width="1.100" fill="#fff"></rect><path d="M154.800 484h3" stroke="#999" stroke-width=".8"></path><rect x="147" y="478" width="5" height="5.500" fill="#fff"></rect><path d="M149.800 482.600l-1.800-1.800 1.800-1.800M148.200 480.800h2.400c1.600 0 2.400 1 2.400 2.600" stroke="#2b88d8" stroke-width="1"></path>
<!-- format bg -->
<path d="M151.800 499.200h4.600l2.600 2.600v8.600h-7.200v-2.400" stroke="#666" stroke-width=".9"></path><path d="M148.600 505.200l3-3 2.600 2.600-3 3zM154.600 505.200c.6.800.8 1.400.4 1.800" stroke="#666" stroke-width=".8"></path>
<!-- photo album -->
<g stroke="#bdbdbd" stroke-width=".9"><rect x="148.600" y="525.800" width="8.600" height="6.600"></rect><path d="M149 531.600l2.400-2.600 1.800 1.600 1.400-1.200 2 2.200"></path><path d="M159.600 524.800v9.800h-7" stroke-dasharray="1.400 1"></path></g>
<!-- hide slide -->
<rect x="148.800" y="546.800" width="10.600" height="9.400" stroke="#555" stroke-width="1.100" fill="#fff"></rect><path d="M158.600 547.800v7.600h-9z" fill="#3a8de0" stroke="none"></path><path d="M159.400 546.800l-10.600 9.400" stroke="#555" stroke-width=".9"></path>
<!-- link -->
<path d="M152.400 580.400h-3.600v-10.200h10.600v4.400" stroke="#666" stroke-width="1.100"></path><path d="M149 571.600h10" stroke="#999" stroke-width=".7"></path><path d="M155.200 579.400c-1.800-1.800.6-4.200 2.400-2.400M157.200 577.600c1.800 1.800-.6 4.200-2.400 2.400" stroke="#2b88d8" stroke-width="1" transform="translate(.6 .4)"></path><path d="M158 581.400c-1.800-1.800.6-4.200 2.400-2.400" stroke="#2b88d8" stroke-width="1" transform="translate(-1 -1.600) rotate(180 158.600 580)"></path>
<!-- new comment -->
<path d="M151.200 594.800h8.400v6h-5l-2 2v-2h-1.400z" stroke="#666" stroke-width=".9"></path><rect x="147.400" y="592" width="4.600" height="4.600" fill="#fff"></rect><path d="M149.800 592v4.600M147.500 594.300h4.600" stroke="#21a366" stroke-width="1"></path>
</svg>
</div>
</div>
<!-- layout submenu -->
<div id="submenu">
<div class="a" style="left:304.300px;top:452px;width:175.200px;height:184.800px;background:#fff;border:1.200px solid #6e6e6e;border-radius:1px 4px 4px 4px;box-shadow:1px 2px 5px rgba(0,0,0,.25)"></div>
<span class="t" style="font-size: 9.3px; font-weight: bold; color: rgb(34, 34, 34); top: 459.81px; left: 314px; transform-origin: 0px 50%; transform: scaleX(0.925);">Custom</span>
<div class="a" style="left:385px;top:474px;width:81px;height:74px;background:#e6e6e6;border:1px solid #bdbdbd"></div>
<div class="a" style="left:308px;top:477.500px;width:73.500px;height:42.500px;background:#fff;border:1px solid #a9a9b4"></div>
<div class="a" style="left:310.500px;top:480px;width:68.500px;height:37.500px;background:#d24726"></div>
<div class="a" style="left:312px;top:481.300px;width:41px;height:3.600px;border:.8px dashed #f3d5cc;background:rgba(255,255,255,.25)"></div>
<div class="a" style="left:388.500px;top:477.500px;width:74.500px;height:42.500px;background:#fff;border:1px solid #a9a9b4"></div>
<div class="a" style="left:391px;top:480px;width:69.500px;height:37.500px;background:#f5f5f5"></div>
<div class="a" style="left:393px;top:485.600px;width:66px;height:.9px;background:#e59a86"></div>
<div class="a" style="left:392.500px;top:481px;width:41px;height:4.400px;border:.8px dashed #9a9a9a"></div>
<div class="a" style="left:392.500px;top:486px;width:26px;height:25px;border:.8px dashed #8a8a8a"></div>
<div class="a" style="left:308px;top:552px;width:73.500px;height:43px;background:#fff;border:1px solid #a9a9b4"></div>
<div class="a" style="left:310.500px;top:554.500px;width:68.500px;height:38px;background:#f5f5f5"></div>
<div class="a" style="left:310.500px;top:554.500px;width:68.500px;height:12.300px;background:#d24726"></div>
<div class="a" style="left:312px;top:561.800px;width:41px;height:4.400px;border:.8px dashed #e9c9c0;background:rgba(255,255,255,.2)"></div>
<div class="a" style="left:312px;top:567.500px;width:56px;height:23.500px;border:.8px dashed #8a8a8a"></div>
<svg class="i" style="left:0;top:0" width="500" height="720" viewBox="0 0 500 720"><g fill="#7fb0e0"><rect x="397.500" y="493.300" width="2.200" height="2"></rect><rect x="411.800" y="493.300" width="2.200" height="2" fill="#a9c8e6"></rect><rect x="397.500" y="503" width="2.200" height="2"></rect><rect x="404.600" y="503" width="2.200" height="2"></rect><rect x="411.800" y="503" width="2.200" height="2" fill="#4a90d9"></rect><rect x="404.600" y="493.300" width="2.200" height="2" fill="#6fb58a"></rect>
<rect x="324.600" y="574" width="2.200" height="2"></rect><rect x="338.600" y="574" width="2.200" height="2" fill="#6fb58a"></rect><rect x="352.600" y="574" width="2.200" height="2" fill="#c4d8ea"></rect><rect x="324.600" y="584" width="2.200" height="2" fill="#a9c8e6"></rect><rect x="338.600" y="584" width="2.200" height="2" fill="#4a90d9"></rect><rect x="352.600" y="584" width="2.200" height="2"></rect></g>
<path d="M472.800 634.400h.1M475.200 634.400h.1M477.600 634.400h.1M475.200 632h.1M477.600 632h.1M477.600 629.600h.1" stroke="#555" stroke-width="1.200" stroke-linecap="square"></path></svg>
<span class="t" style="font-size: 9.3px; color: rgb(51, 51, 51); top: 523.61px; left: 324.36px; transform-origin: 50% 50%; transform: scaleX(0.926);">Title Slide</span>
<span class="t" style="font-size: 9.3px; color: rgb(51, 51, 51); top: 523.61px; left: 390.17px; transform-origin: 50% 50%; transform: scaleX(0.951);">Title and Content</span>
<span class="t" style="font-size: 9.3px; color: rgb(51, 51, 51); top: 597.81px; left: 312.55px; transform-origin: 50% 50%; transform: scaleX(0.936);">Section Header</span>
</div>
<!-- notes + right scrollbar + status bar -->
<div class="a" style="left:208px;top:675px;width:1052px;height:1px;background:rgba(0,0,0,.06)"></div>
<span class="t" style="font-size: 11.3px; color: rgb(85, 85, 85); top: 681.94px; left: 213px; transform-origin: 0px 50%; transform: scaleX(0.972);">Click to add notes</span>
<div class="a" style="left:1261.500px;top:100px;width:10.500px;height:612px;background:rgba(255,255,255,.12)"></div>
<svg class="i" style="left:1261px;top:100px" width="11" height="612" viewBox="0 0 11 612"><path d="M2.500 9.400L6 4.800l3.500 4.600z" fill="#555"></path><rect x="3.300" y="291.700" width="5.500" height="45" rx="2.700" fill="#666"></rect><path d="M2.500 526L6 530.600l3.500-4.600z" fill="#555"></path><path d="M3.200 541.200L6 537l2.800 4.200zM3.200 545.600L6 541.400l2.800 4.200z" fill="#555"></path><path d="M3.200 550.800L6 555l2.800-4.200zM3.200 555.200L6 559.400l2.800-4.200z" fill="#555"></path></svg>
<div class="a" style="left:0;top:712px;width:1272px;height:8px;background:#f3f3f3"></div>
<div class="a" style="left:1004.500px;top:712px;width:29.500px;height:8px;background:#e1e1e1"></div>
<div class="a" style="left:0;top:712px;width:1272px;height:8px;overflow:hidden">
<span class="t st" style="top: 4.6px; left: 8px; transform-origin: 0px 50%; transform: scaleX(0.881);">Slide 7 of 11</span>
<span class="t st" style="top: 4.6px; left: 88px; transform-origin: 0px 50%; transform: scaleX(0.856);">English (United States)</span>
<span class="t st" style="top: 4.6px; left: 189px; transform-origin: 0px 50%; transform: scaleX(0.986);">Accessibility: Investigate</span>
<span class="t st" style="top: 4.6px; left: 895px; transform-origin: 0px 50%; transform: scaleX(0.74);">Notes</span>
<span class="t st" style="top: 4.6px; left: 936px; transform-origin: 0px 50%; transform: scaleX(0.872);">Display Settings</span>
<span class="t st" style="top: 4.6px; left: 1230px; transform-origin: 0px 50%; transform: scaleX(0.852);">82%</span>
<svg class="i" style="left:0;top:1px" width="1272" height="8" viewBox="0 0 1272 8" fill="none" stroke="#444" stroke-width=".9">
<path d="M64.500 8.500v-5h4.800v5M69.300 3.500h4.800v5"></path>
<path d="M180.600 4.800l2.200 1 2.200-1M182.800 3.800v3.500M180.600 9l2.200-3 2.200 3"></path><circle cx="182.800" cy="2.800" r=".9"></circle>
<path d="M878 9l2.500-3.500h5L888 9"></path><path d="M922.500 3.500h9v6h-9z"></path><path d="M925 7l2 2 3-3.500"></path>
<rect x="1015.500" y="3.500" width="8" height="6"></rect><rect x="1017.500" y="5.500" width="4" height="4"></rect>
<rect x="1045.500" y="3.500" width="3.500" height="3.200"></rect><rect x="1051" y="3.500" width="3.500" height="3.200"></rect><rect x="1045.500" y="8.200" width="3.500" height="3"></rect><rect x="1051" y="8.200" width="3.500" height="3"></rect>
<path d="M1075.500 9v-5.500h4v5.500M1079.500 3.500h4V9M1077 5.500h1.500M1081 5.500h1.500"></path>
<path d="M1104.500 3.500h8M1105.500 3.500v5h6v-5"></path>
<path d="M1171 6.500l2.500-1 .5 4h-3z" fill="#444"></path><path d="M1220.500 7v3" stroke="#999"></path>
<path d="M1262 9l5-5.500 5 5.500M1264 9V6.500"></path>
</svg>
</div>

</body></html>
